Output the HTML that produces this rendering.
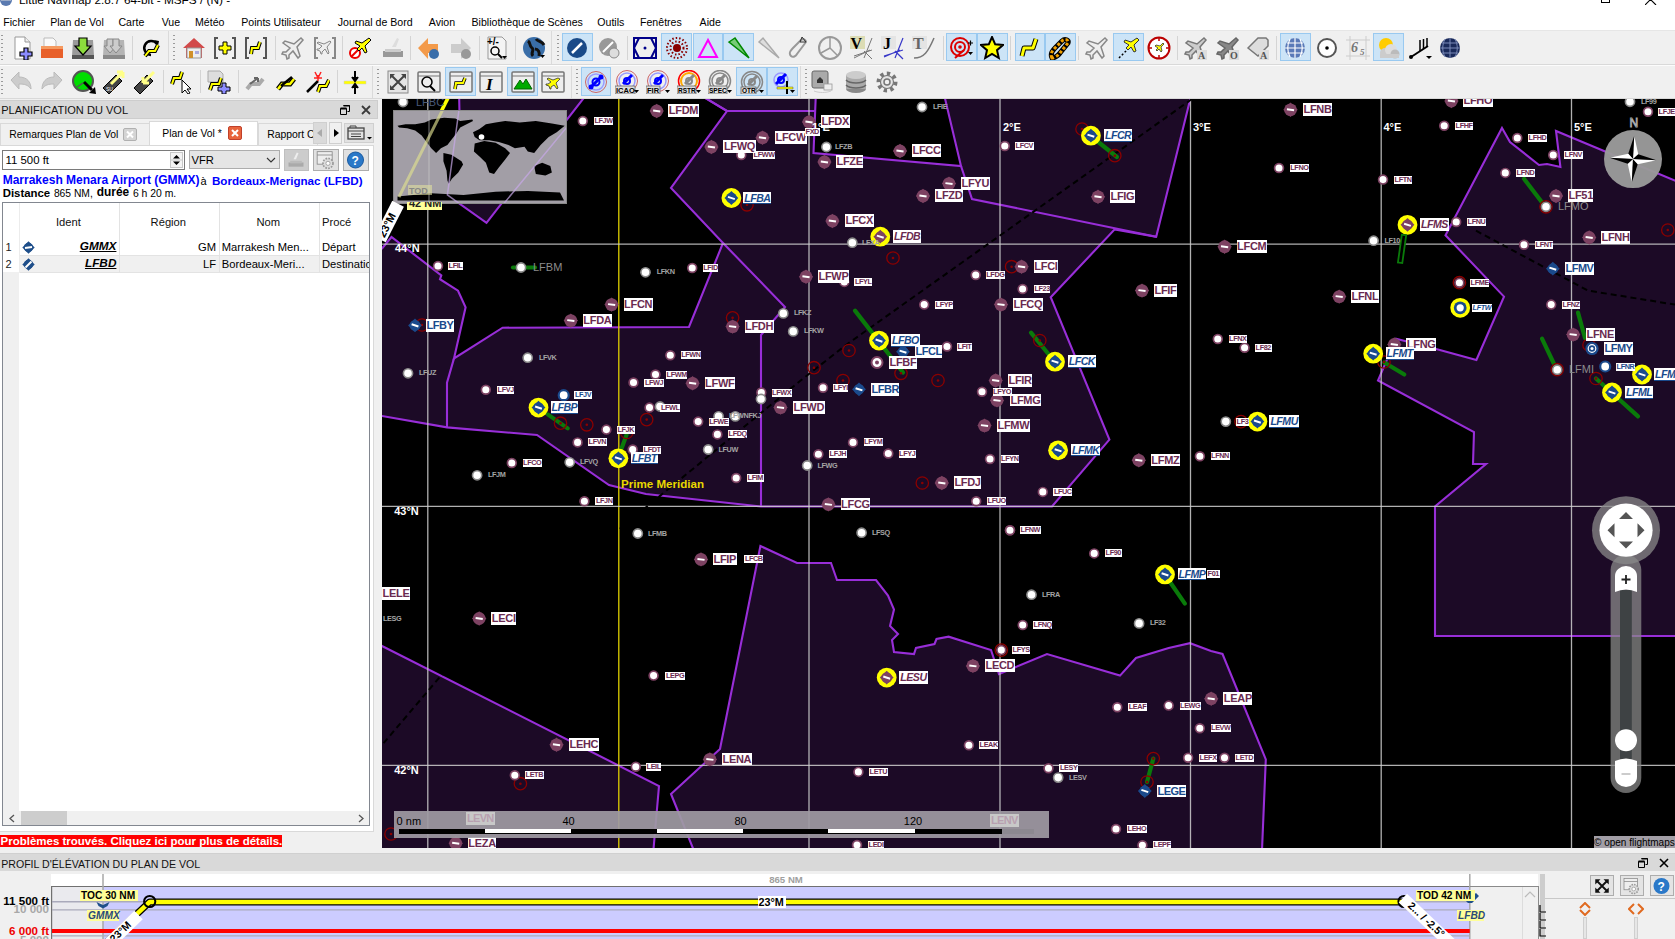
<!DOCTYPE html>
<html><head><meta charset="utf-8">
<style>
*{box-sizing:border-box;margin:0;padding:0}
html,body{width:1675px;height:939px;overflow:hidden;background:#f0f0f0;font-family:"Liberation Sans",sans-serif;font-size:12px;color:#000}
.a{position:absolute}
.t{position:absolute;white-space:pre;line-height:1}
</style></head><body>
<div class="a" style="left:0;top:0;width:1675px;height:30px;background:#fff"></div>
<svg class="a" style="left:0;top:-5px" width="14" height="12"><circle cx="6" cy="5" r="6" fill="#5a7ab0"/><path d="M1 5h10" stroke="#ddd"/></svg>
<div class="t" style="left:19px;top:-4.99px;font-size:11.8px;color:#000">Little Navmap 2.8.7 64-bit - MSFS / (N) -</div>
<div class="a" style="left:1601px;top:-6px;width:9px;height:9px;border:1px solid #000"></div>
<svg class="a" style="left:1645px;top:-6px" width="12" height="11"><path d="M0 0L11 11M11 0L0 11" stroke="#000" stroke-width="1.1"/></svg>
<div class="t" style="left:3.3px;top:16.83px;font-size:10.6px;">Fichier</div>
<div class="t" style="left:50.2px;top:16.83px;font-size:10.6px;">Plan de Vol</div>
<div class="t" style="left:118.4px;top:16.83px;font-size:10.6px;">Carte</div>
<div class="t" style="left:161.7px;top:16.83px;font-size:10.6px;">Vue</div>
<div class="t" style="left:195px;top:16.83px;font-size:10.6px;">Météo</div>
<div class="t" style="left:241.2px;top:16.83px;font-size:10.6px;">Points Utilisateur</div>
<div class="t" style="left:337.8px;top:16.83px;font-size:10.6px;">Journal de Bord</div>
<div class="t" style="left:428.8px;top:16.83px;font-size:10.6px;">Avion</div>
<div class="t" style="left:471.5px;top:16.83px;font-size:10.6px;">Bibliothèque de Scènes</div>
<div class="t" style="left:597.3px;top:16.83px;font-size:10.6px;">Outils</div>
<div class="t" style="left:640px;top:16.83px;font-size:10.6px;">Fenêtres</div>
<div class="t" style="left:699.6px;top:16.83px;font-size:10.6px;">Aide</div>
<div class="a" style="left:0;top:30px;width:1675px;height:1px;background:#e6e6e6"></div>
<div class="a" style="left:0;top:64px;width:1675px;height:1px;background:#d9d9d9"></div>
<div class="a" style="left:0;top:65px;width:1675px;height:1px;background:#fcfcfc"></div>
<div class="a" style="left:0;top:98px;width:1675px;height:1px;background:#d9d9d9"></div>
<div class="a" style="left:562px;top:33px;width:31px;height:28.4px;background:#cce4f7;border:1px solid #99c9f0"></div>
<div class="a" style="left:661.4px;top:33px;width:31.100000000000023px;height:28.4px;background:#cce4f7;border:1px solid #99c9f0"></div>
<div class="a" style="left:692.5px;top:33px;width:30.5px;height:28.4px;background:#cce4f7;border:1px solid #99c9f0"></div>
<div class="a" style="left:723px;top:33px;width:30.600000000000023px;height:28.4px;background:#cce4f7;border:1px solid #99c9f0"></div>
<div class="a" style="left:946.2px;top:33px;width:30.799999999999955px;height:28.4px;background:#cce4f7;border:1px solid #99c9f0"></div>
<div class="a" style="left:977px;top:33px;width:30.799999999999955px;height:28.4px;background:#cce4f7;border:1px solid #99c9f0"></div>
<div class="a" style="left:1014.5px;top:33px;width:30.5px;height:28.4px;background:#cce4f7;border:1px solid #99c9f0"></div>
<div class="a" style="left:1045px;top:33px;width:30.5px;height:28.4px;background:#cce4f7;border:1px solid #99c9f0"></div>
<div class="a" style="left:1113.4px;top:33px;width:30.299999999999955px;height:28.4px;background:#cce4f7;border:1px solid #99c9f0"></div>
<div class="a" style="left:1280px;top:33px;width:30.59999999999991px;height:28.4px;background:#cce4f7;border:1px solid #99c9f0"></div>
<div class="a" style="left:1373.2px;top:33px;width:30.399999999999864px;height:28.4px;background:#cce4f7;border:1px solid #99c9f0"></div>
<div class="a" style="left:445px;top:67px;width:31px;height:28.5px;background:#cce4f7;border:1px solid #99c9f0"></div>
<div class="a" style="left:507px;top:67px;width:31px;height:28.5px;background:#cce4f7;border:1px solid #99c9f0"></div>
<div class="a" style="left:581.4px;top:67px;width:30.100000000000023px;height:28.5px;background:#cce4f7;border:1px solid #99c9f0"></div>
<div class="a" style="left:736px;top:67px;width:31px;height:28.5px;background:#cce4f7;border:1px solid #99c9f0"></div>
<div class="a" style="left:767px;top:67px;width:31px;height:28.5px;background:#cce4f7;border:1px solid #99c9f0"></div>
<div class="a" style="left:132px;top:36px;width:1px;height:24px;background:#d4d4d4"></div>
<div class="a" style="left:274.6px;top:36px;width:1px;height:24px;background:#d4d4d4"></div>
<div class="a" style="left:342.3px;top:36px;width:1px;height:24px;background:#d4d4d4"></div>
<div class="a" style="left:410.4px;top:36px;width:1px;height:24px;background:#d4d4d4"></div>
<div class="a" style="left:478.6px;top:36px;width:1px;height:24px;background:#d4d4d4"></div>
<div class="a" style="left:515.3px;top:36px;width:1px;height:24px;background:#d4d4d4"></div>
<div class="a" style="left:626.5px;top:36px;width:1px;height:24px;background:#d4d4d4"></div>
<div class="a" style="left:942.6px;top:36px;width:1px;height:24px;background:#d4d4d4"></div>
<div class="a" style="left:1010.3px;top:36px;width:1px;height:24px;background:#d4d4d4"></div>
<div class="a" style="left:1078px;top:36px;width:1px;height:24px;background:#d4d4d4"></div>
<div class="a" style="left:1177.4px;top:36px;width:1px;height:24px;background:#d4d4d4"></div>
<div class="a" style="left:1276.4px;top:36px;width:1px;height:24px;background:#d4d4d4"></div>
<div class="a" style="left:163.4px;top:70px;width:1px;height:23px;background:#d4d4d4"></div>
<div class="a" style="left:200px;top:70px;width:1px;height:23px;background:#d4d4d4"></div>
<div class="a" style="left:237.8px;top:70px;width:1px;height:23px;background:#d4d4d4"></div>
<div class="a" style="left:337px;top:70px;width:1px;height:23px;background:#d4d4d4"></div>
<div class="a" style="left:168.4px;top:31px;width:1px;height:33px;background:#dadada"></div>
<div class="a" style="left:551.3px;top:31px;width:1px;height:33px;background:#dadada"></div>
<div class="a" style="left:372.4px;top:66px;width:1px;height:32px;background:#dadada"></div>
<div class="a" style="left:570.5px;top:66px;width:1px;height:32px;background:#dadada"></div>
<div class="a" style="left:799.6px;top:66px;width:1px;height:32px;background:#dadada"></div>
<div class="a" style="left:1px;top:35px;width:2px;height:26px;background:repeating-linear-gradient(#9a9a9a 0 1px,transparent 1px 4px)"></div>
<div class="a" style="left:173.4px;top:35px;width:2px;height:26px;background:repeating-linear-gradient(#9a9a9a 0 1px,transparent 1px 4px)"></div>
<div class="a" style="left:556.8px;top:35px;width:2px;height:26px;background:repeating-linear-gradient(#9a9a9a 0 1px,transparent 1px 4px)"></div>
<div class="a" style="left:1px;top:69px;width:2px;height:26px;background:repeating-linear-gradient(#9a9a9a 0 1px,transparent 1px 4px)"></div>
<div class="a" style="left:377.4px;top:69px;width:2px;height:26px;background:repeating-linear-gradient(#9a9a9a 0 1px,transparent 1px 4px)"></div>
<div class="a" style="left:575.5px;top:69px;width:2px;height:26px;background:repeating-linear-gradient(#9a9a9a 0 1px,transparent 1px 4px)"></div>
<div class="a" style="left:804.6px;top:69px;width:2px;height:26px;background:repeating-linear-gradient(#9a9a9a 0 1px,transparent 1px 4px)"></div>
<svg class="a" style="left:11px;top:36px" width="24" height="24" viewBox="0 0 24 24"><path d="M4 1h10l5 5v17H4z" fill="#fff" stroke="#999"/><path d="M14 1v5h5" fill="#eee" stroke="#999"/><path d="M13 12h4v4h4v4h-4v4h-4v-4H9v-4h4z" fill="#8c8cff" stroke="#000" stroke-width="1.2"/></svg>
<svg class="a" style="left:40px;top:36px" width="24" height="24" viewBox="0 0 24 24"><path d="M4 2h9l3 3v6H4z" fill="#fafafa" stroke="#bbb"/><path d="M1 10h22v12H1z" fill="#e8602a"/><path d="M1 10h22v3H1z" fill="#f59a60"/></svg>
<svg class="a" style="left:71px;top:36px" width="24" height="24" viewBox="0 0 24 24"><path d="M2 4h20l1 16H1z" fill="#9a9a9a"/><path d="M1 19h22v4H1z" fill="#555"/><path d="M8 2h8v8h4l-8 9-8-9h4z" fill="#8cdc3c" stroke="#000" stroke-width="1.2"/></svg>
<svg class="a" style="left:102px;top:36px" width="24" height="24" viewBox="0 0 24 24"><path d="M2 4h20l1 16H1z" fill="#b4b4b4"/><path d="M1 19h22v4H1z" fill="#8a8a8a"/><path d="M5 3h6v7h3l-6 7-6-7h3z" fill="#ccc" stroke="#888"/><path d="M11 3h6v7h3l-6 7-6-7h3z" fill="#ccc" stroke="#888"/></svg>
<svg class="a" style="left:139px;top:36px" width="24" height="24" viewBox="0 0 24 24"><path d="M12 19a7 7 0 1 1 6-11" fill="none" stroke="#000" stroke-width="2.5"/><path d="M15 4l5 1-1 5z" fill="#000"/><path d="M6 20l4-5h6l3-6" fill="none" stroke="#000" stroke-width="4"/><path d="M6 20l4-5h6l3-6" fill="none" stroke="#ff0" stroke-width="2"/></svg>
<svg class="a" style="left:182px;top:36px" width="24" height="24" viewBox="0 0 24 24"><path d="M12 2L1 12h3v10h16V12h3z" fill="#d24a4a"/><path d="M5 12h14v10H5z" fill="#eee" stroke="#999"/><path d="M7 15h4v7H7z" fill="#d0902a"/><path d="M13 15h4v3h-4z" fill="#aad"/></svg>
<svg class="a" style="left:213px;top:36px" width="24" height="24" viewBox="0 0 24 24"><path d="M5 2H2v20h3M19 2h3v20h-3" fill="none" stroke="#555" stroke-width="2"/><path d="M10 6h4v4h4v4h-4v4h-4v-4H6v-4h4z" fill="#ff0" stroke="#000"/></svg>
<svg class="a" style="left:244px;top:36px" width="24" height="24" viewBox="0 0 24 24"><path d="M5 2H2v20h3M19 2h3v20h-3" fill="none" stroke="#555" stroke-width="2"/><path d="M7 18l1-6h6l2-6" fill="none" stroke="#000" stroke-width="4"/><path d="M7 18l1-6h6l2-6" fill="none" stroke="#ff0" stroke-width="2"/></svg>
<svg class="a" style="left:281px;top:36px" width="24" height="24" viewBox="0 0 24 24"><path d="M20 2l2 2-6 7 3 9-2 2-5-7-4 4v3l-2 1-1-4-4-1 1-2h3l4-4-7-5 2-2 9 3z" fill="#eee" stroke="#888" stroke-width="1.5"/></svg>
<svg class="a" style="left:313px;top:36px" width="24" height="24" viewBox="0 0 24 24"><path d="M5 2H2v20h3M19 2h3v20h-3" fill="none" stroke="#888" stroke-width="2"/><path d="M17 5l1 1-4 5 2 6-1 1-3-5-3 3v2h-1l-1-3-3-1v-1h2l3-3-5-3 1-1 6 2z" fill="#eee" stroke="#888"/></svg>
<svg class="a" style="left:348px;top:36px" width="24" height="24" viewBox="0 0 24 24"><circle cx="7" cy="17" r="5" fill="#fff" stroke="#e00" stroke-width="2"/><path d="M3 21l8-8" stroke="#e00" stroke-width="2"/><path d="M21 2l2 2-6 6 2 6-2 1-3-5-3 3-2-2 3-3-5-3 1-2 6 2z" fill="#ff0" stroke="#000"/></svg>
<svg class="a" style="left:381px;top:36px" width="24" height="24" viewBox="0 0 24 24"><path d="M16 2l2 1-3 8h-4z" fill="#ddd"/><path d="M2 15h20v6H2z" fill="#999"/><path d="M4 13h16v3H4z" fill="#ccc"/></svg>
<svg class="a" style="left:417px;top:36px" width="24" height="24" viewBox="0 0 24 24"><path d="M1 12L11 2v6h10v9H11v6z" fill="#f39a4a"/><circle cx="17" cy="18" r="5" fill="#3a6eaa"/></svg>
<svg class="a" style="left:448px;top:36px" width="24" height="24" viewBox="0 0 24 24"><path d="M23 12L13 2v6H3v9h10v6z" fill="#ccc"/><circle cx="18" cy="18" r="5" fill="#999"/></svg>
<svg class="a" style="left:485px;top:36px" width="24" height="24" viewBox="0 0 24 24"><path d="M3 1h14l4 4v18H3z" fill="#f4f4f4" stroke="#999"/><text x="2" y="9" font-size="10" font-weight="bold" font-family="Liberation Sans">+/-</text><circle cx="10" cy="15" r="4" fill="none" stroke="#000" stroke-width="1.5"/><path d="M13 18l4 4" stroke="#000" stroke-width="2"/><path d="M17 20h5l-2.5 3z" fill="#000"/></svg>
<svg class="a" style="left:522px;top:36px" width="24" height="24" viewBox="0 0 24 24"><circle cx="12" cy="12" r="11" fill="#3a6ea8"/><path d="M6 5c3 2 1 5 4 7s-2 5 1 8M14 3c2 3 6 2 8 6M13 13c3 0 5 3 4 7" stroke="#111" stroke-width="3" fill="none"/><path d="M18 19h5l-2.5 3z" fill="#000"/></svg>
<svg class="a" style="left:565px;top:36px" width="24" height="24" viewBox="0 0 24 24"><circle cx="12" cy="12" r="10" fill="#1a4a88"/><path d="M7 17L17 7" stroke="#fff" stroke-width="2.5"/></svg>
<svg class="a" style="left:597px;top:36px" width="24" height="24" viewBox="0 0 24 24"><circle cx="11" cy="11" r="9" fill="#999"/><path d="M6 16L16 6" stroke="#fff" stroke-width="2"/><circle cx="17" cy="17" r="5" fill="#ddd" stroke="#888"/></svg>
<svg class="a" style="left:633px;top:36px" width="24" height="24" viewBox="0 0 24 24"><path d="M1 2h22v20H1z" fill="none" stroke="#00008a" stroke-width="2"/><path d="M6 2L1 12l5 10M18 2l5 10-5 10" fill="none" stroke="#00008a" stroke-width="2"/><circle cx="12" cy="12" r="1.5" fill="#00008a"/></svg>
<svg class="a" style="left:665px;top:36px" width="24" height="24" viewBox="0 0 24 24"><circle cx="12" cy="12" r="10" fill="none" stroke="#8a0000" stroke-width="2" stroke-dasharray="1.5 2"/><circle cx="12" cy="12" r="6.5" fill="none" stroke="#8a0000" stroke-width="2" stroke-dasharray="1.5 2"/><circle cx="12" cy="12" r="4" fill="#8a0000"/></svg>
<svg class="a" style="left:696px;top:36px" width="24" height="24" viewBox="0 0 24 24"><path d="M12 4L3 21h18z" fill="none" stroke="#f0f" stroke-width="2"/></svg>
<svg class="a" style="left:727px;top:36px" width="24" height="24" viewBox="0 0 24 24"><path d="M2 6l6-4 14 20z" fill="#7c7" stroke="#080" stroke-width="1.5"/></svg>
<svg class="a" style="left:757px;top:36px" width="24" height="24" viewBox="0 0 24 24"><path d="M2 6l4-4 16 20z" fill="#ddd" stroke="#aaa" stroke-width="1.5"/></svg>
<svg class="a" style="left:787px;top:36px" width="24" height="24" viewBox="0 0 24 24"><path d="M4 20c-3-3 0-6 2-8l8-8c2-2 5 0 5 2l-9 12c-1 2-4 4-6 2z" fill="none" stroke="#999" stroke-width="2"/><path d="M15 1l4 5h-6z" fill="none" stroke="#333"/></svg>
<svg class="a" style="left:818px;top:36px" width="24" height="24" viewBox="0 0 24 24"><circle cx="12" cy="12" r="11" fill="none" stroke="#999" stroke-width="2"/><path d="M12 12V2M12 12L3 17M12 12l8 8" stroke="#999" stroke-width="1.5"/></svg>
<svg class="a" style="left:850px;top:36px" width="24" height="24" viewBox="0 0 24 24"><rect x="0" y="0" width="15" height="13" fill="#dcdcb4"/><text x="0.5" y="12.5" font-size="16" font-weight="bold" font-family="Liberation Serif">V</text><path d="M4 20l18-6M4 22l16-8M14 15l8 8M22 2l-8 20" stroke="#777" stroke-width="1"/></svg>
<svg class="a" style="left:881px;top:36px" width="24" height="24" viewBox="0 0 24 24"><rect x="0" y="0" width="15" height="13" fill="#e4e4e4"/><text x="2" y="12.5" font-size="16" font-weight="bold" font-family="Liberation Serif">J</text><path d="M3 20l19-6M3 21l16-7M14 15l8 8M22 2l-8 20" stroke="#3838c8" stroke-width="1.2"/></svg>
<svg class="a" style="left:912px;top:36px" width="24" height="24" viewBox="0 0 24 24"><rect x="0" y="0" width="15" height="13" fill="#e4e4e4"/><text x="1" y="12.5" font-size="16" font-weight="bold" font-family="Liberation Serif" fill="#666">T</text><path d="M2 22c10 0 14-6 20-20" fill="none" stroke="#777" stroke-width="1.5"/></svg>
<svg class="a" style="left:950px;top:36px" width="24" height="24" viewBox="0 0 24 24"><circle cx="10" cy="11" r="9" fill="none" stroke="#d00" stroke-width="2"/><circle cx="10" cy="11" r="5" fill="none" stroke="#d00" stroke-width="2"/><circle cx="10" cy="11" r="1.8" fill="#d00"/><path d="M18 7h5M20.5 4.5v5" stroke="#000" stroke-width="1.2"/><path d="M18 16h5l-2.5 3z" fill="#000"/><path d="M14 14l-9 8" stroke="#d00" stroke-width="2"/></svg>
<svg class="a" style="left:980px;top:36px" width="24" height="24" viewBox="0 0 24 24"><path d="M12 1l3.2 7.3 7.8.7-6 5.2 1.8 7.8L12 18l-6.8 4 1.8-7.8-6-5.2 7.8-.7z" fill="#ff0" stroke="#000" stroke-width="2"/></svg>
<svg class="a" style="left:1018px;top:36px" width="24" height="24" viewBox="0 0 24 24"><path d="M4 20l2-8h9l3-9" fill="none" stroke="#000" stroke-width="5" stroke-linejoin="round"/><path d="M4 20l2-8h9l3-9" fill="none" stroke="#ff0" stroke-width="3" stroke-linejoin="round"/></svg>
<svg class="a" style="left:1048px;top:36px" width="24" height="24" viewBox="0 0 24 24"><path d="M4 22c-2-4 0-7 3-10l7-7c3-3 7-1 6 2l-8 10c-2 3-6 5-8 5z" fill="none" stroke="#000" stroke-width="5"/><path d="M4 22c-2-4 0-7 3-10l7-7c3-3 7-1 6 2l-8 10c-2 3-6 5-8 5z" fill="none" stroke="#f0a000" stroke-width="3" stroke-dasharray="3 2"/></svg>
<svg class="a" style="left:1085px;top:36px" width="24" height="24" viewBox="0 0 24 24"><path d="M20 2l2 2-6 7 3 9-2 2-5-7-4 4v3l-2 1-1-4-4-1 1-2h3l4-4-7-5 2-2 9 3z" fill="#eee" stroke="#888" stroke-width="1.5"/></svg>
<svg class="a" style="left:1117px;top:36px" width="24" height="24" viewBox="0 0 24 24"><path d="M2 22l8-8" stroke="#000" stroke-width="1.5" stroke-dasharray="2 2"/><path d="M20 2l2 2-5 5 2 6-2 1-3-5-3 3-2-2 3-3-5-3 1-2 6 2z" fill="#ff0" stroke="#333"/></svg>
<svg class="a" style="left:1147px;top:36px" width="24" height="24" viewBox="0 0 24 24"><circle cx="12" cy="12" r="10.5" fill="#fff" stroke="#b00" stroke-width="2"/><path d="M12 2v3M12 19v3M2 12h3M19 12h3" stroke="#b00" stroke-width="1.5"/><path d="M16 7l1 1-3 3 1 4-1 1-2-3-2 2-1-1 2-2-3-2 1-1 4 1z" fill="#ff0" stroke="#333" stroke-width=".8"/></svg>
<svg class="a" style="left:1184px;top:36px" width="24" height="24" viewBox="0 0 24 24"><path d="M20 2l2 2-6 7 3 9-2 2-5-7-4 4v3l-2 1-1-4-4-1 1-2h3l4-4-7-5 2-2 9 3z" fill="#ccc" stroke="#777" stroke-width="1.5"/><rect x="13" y="14" width="10" height="10" fill="#ddd"/><text x="14" y="23" font-size="10" font-weight="bold" font-family="Liberation Serif" fill="#555">A</text></svg>
<svg class="a" style="left:1216px;top:36px" width="24" height="24" viewBox="0 0 24 24"><path d="M20 2l2 2-6 7 3 9-2 2-5-7-4 4v3l-2 1-1-4-4-1 1-2h3l4-4-7-5 2-2 9 3z" fill="#888" stroke="#666" stroke-width="1.5"/><rect x="13" y="14" width="10" height="10" fill="#ddd"/><text x="14" y="23" font-size="10" font-weight="bold" font-family="Liberation Serif" fill="#555">O</text></svg>
<svg class="a" style="left:1246px;top:36px" width="24" height="24" viewBox="0 0 24 24"><path d="M2 12l10-10h8l2 2v6l-10 10z" fill="#ddd" stroke="#777" stroke-width="1.5"/><rect x="13" y="14" width="10" height="10" fill="#ddd"/><text x="14" y="23" font-size="10" font-weight="bold" font-family="Liberation Serif" fill="#555">A</text></svg>
<svg class="a" style="left:1283px;top:36px" width="24" height="24" viewBox="0 0 24 24"><circle cx="12" cy="12" r="10" fill="#5a7ab8"/><path d="M2 12h20M12 2v20M4 7h16M4 17h16M7 3c-3 6-3 12 0 18M17 3c3 6 3 12 0 18" stroke="#fff" stroke-width="1.2" fill="none"/></svg>
<svg class="a" style="left:1315px;top:36px" width="24" height="24" viewBox="0 0 24 24"><circle cx="12" cy="12" r="9" fill="#fff" stroke="#555" stroke-width="2"/><circle cx="12" cy="12" r="1.8" fill="#000"/></svg>
<svg class="a" style="left:1346px;top:36px" width="24" height="24" viewBox="0 0 24 24"><path d="M4 0v24M20 0v24M0 4h24M0 20h24" stroke="#ccc"/><text x="5" y="16" font-size="14" font-style="italic" font-weight="bold" font-family="Liberation Serif" fill="#777">6</text><text x="14" y="19" font-size="9" font-style="italic" font-weight="bold" font-family="Liberation Serif" fill="#777">5</text></svg>
<svg class="a" style="left:1376px;top:36px" width="24" height="24" viewBox="0 0 24 24"><circle cx="10" cy="9" r="7" fill="#fc0"/><circle cx="9" cy="17" r="5" fill="#ccc"/><circle cx="15" cy="14" r="6" fill="#ddd"/><circle cx="19" cy="18" r="4.5" fill="#bbb"/><path d="M4 18h19v4H4z" fill="#ccc"/></svg>
<svg class="a" style="left:1408px;top:36px" width="24" height="24" viewBox="0 0 24 24"><path d="M3 21l17-11" stroke="#000" stroke-width="2"/><circle cx="3" cy="21" r="2" fill="#000"/><path d="M12 15V4M15.5 13V3M19 11V2" stroke="#000" stroke-width="1.5"/><path d="M18 20h6l-3 3z" fill="#000"/></svg>
<svg class="a" style="left:1438px;top:36px" width="24" height="24" viewBox="0 0 24 24"><circle cx="12" cy="12" r="10" fill="#1a2a5a"/><path d="M2 12h20M12 2v20M4 7h16M4 17h16M7 3c-3 6-3 12 0 18M17 3c3 6 3 12 0 18" stroke="#7a8ab8" stroke-width="1" fill="none"/></svg>
<svg class="a" style="left:9px;top:70px" width="24" height="24" viewBox="0 0 24 24"><path d="M2 10l8-8v5c8 0 12 5 12 12-3-4-6-5-12-5v5z" fill="#ccc" stroke="#bbb"/></svg>
<svg class="a" style="left:40px;top:70px" width="24" height="24" viewBox="0 0 24 24"><path d="M22 10l-8-8v5C6 7 2 12 2 19c3-4 6-5 12-5v5z" fill="#ccc" stroke="#bbb"/></svg>
<svg class="a" style="left:72px;top:70px" width="24" height="24" viewBox="0 0 24 24"><circle cx="11" cy="11" r="10" fill="#0d0" stroke="#555" stroke-width="2"/><path d="M12 12l8 8" stroke="#000" stroke-width="3"/><path d="M17 23l6-6 1 7z" fill="#000"/><path d="M5 17l6-4" stroke="#555" stroke-width="1.5"/></svg>
<svg class="a" style="left:102px;top:70px" width="24" height="24" viewBox="0 0 24 24"><path d="M1 18L14 5l6 6L7 24z" fill="#444" stroke="#000"/><path d="M9 14L21 2M21 2h-6M21 2v6" stroke="#ff8" stroke-width="3"/><text x="4" y="21" font-size="5" fill="#fff">SU</text></svg>
<svg class="a" style="left:133px;top:70px" width="24" height="24" viewBox="0 0 24 24"><path d="M1 18L14 5l6 6L7 24z" fill="#444" stroke="#000"/><path d="M21 2L10 13M10 13h6M10 13V7" stroke="#ff8" stroke-width="3"/></svg>
<svg class="a" style="left:170px;top:70px" width="24" height="24" viewBox="0 0 24 24"><path d="M2 14l2-6h6l2-6" fill="none" stroke="#000" stroke-width="4"/><path d="M2 14l2-6h6l2-6" fill="none" stroke="#ff0" stroke-width="2"/><path d="M12 10v13l3-3 3 4 2-1-3-4h4z" fill="#fff" stroke="#000"/></svg>
<svg class="a" style="left:207px;top:70px" width="24" height="24" viewBox="0 0 24 24"><path d="M1 1h12l3 3v8H1z" fill="#ddd" stroke="#aaa"/><path d="M3 20l2-6h7l2-6" fill="none" stroke="#000" stroke-width="4"/><path d="M3 20l2-6h7l2-6" fill="none" stroke="#ff0" stroke-width="2"/><path d="M15 13h4v4h4v4h-4v3h-4v-3h-4v-4h4z" fill="#8c8cff" stroke="#000"/></svg>
<svg class="a" style="left:244px;top:70px" width="24" height="24" viewBox="0 0 24 24"><path d="M3 19l4-5h8l4-5" fill="none" stroke="#aaa" stroke-width="4"/><path d="M6 14l8-6M14 8h-4M14 8v4" stroke="#666" stroke-width="2"/></svg>
<svg class="a" style="left:275px;top:70px" width="24" height="24" viewBox="0 0 24 24"><path d="M3 19l4-5h8l4-5" fill="none" stroke="#000" stroke-width="5"/><path d="M3 19l4-5h8l4-5" fill="none" stroke="#ff0" stroke-width="2.5"/><path d="M6 16l11-9" stroke="#000" stroke-width="2.5"/></svg>
<svg class="a" style="left:306px;top:70px" width="24" height="24" viewBox="0 0 24 24"><path d="M1 22l11-11" stroke="#000" stroke-width="2.5"/><path d="M9 2l3 6M15 2l-3 6M12 5v6M8 8h8" stroke="#f22" stroke-width="1.5"/><path d="M12 22l2-6h6l3-6" fill="none" stroke="#000" stroke-width="4"/><path d="M12 22l2-6h6l3-6" fill="none" stroke="#ff0" stroke-width="2"/></svg>
<svg class="a" style="left:343px;top:70px" width="24" height="24" viewBox="0 0 24 24"><path d="M1 11h22v3H1z" fill="#ff0" stroke="#ccc" stroke-width=".5"/><path d="M12 1v9M9 7l3 4 3-4M12 24v-9M9 18l3-4 3 4" stroke="#000" stroke-width="2" fill="#000"/></svg>
<svg class="a" style="left:386px;top:70px" width="24" height="24" viewBox="0 0 24 24"><rect x="2" y="1" width="20" height="22" fill="#e4e4e4" stroke="#888"/><path d="M5 5l14 14M19 5L5 19" stroke="#444" stroke-width="2"/><path d="M4 4h5l-5 5zM20 4h-5l5 5zM4 20h5l-5-5zM20 20h-5l5-5z" fill="#444"/></svg>
<svg class="a" style="left:417px;top:70px" width="24" height="24" viewBox="0 0 24 24"><rect x="1" y="2" width="22" height="20" rx="1" fill="#eee" stroke="#777" stroke-width="1.5"/><path d="M1 6h22" stroke="#777"/><circle cx="10" cy="12" r="5" fill="none" stroke="#000" stroke-width="1.5"/><path d="M13 16l5 5" stroke="#000" stroke-width="2"/></svg>
<svg class="a" style="left:449px;top:70px" width="24" height="24" viewBox="0 0 24 24"><rect x="1" y="2" width="22" height="20" rx="1" fill="#eee" stroke="#777" stroke-width="1.5"/><path d="M1 6h22" stroke="#777"/><path d="M6 19l1-6h7l2-5" fill="none" stroke="#000" stroke-width="3.5"/><path d="M6 19l1-6h7l2-5" fill="none" stroke="#ff0" stroke-width="2"/></svg>
<svg class="a" style="left:479px;top:70px" width="24" height="24" viewBox="0 0 24 24"><rect x="1" y="2" width="22" height="20" rx="1" fill="#eee" stroke="#777" stroke-width="1.5"/><path d="M1 6h22" stroke="#777"/><text x="7" y="20" font-size="17" font-weight="bold" font-style="italic" font-family="Liberation Serif">I</text></svg>
<svg class="a" style="left:511px;top:70px" width="24" height="24" viewBox="0 0 24 24"><rect x="1" y="2" width="22" height="20" rx="1" fill="#eee" stroke="#777" stroke-width="1.5"/><path d="M1 6h22" stroke="#777"/><path d="M3 19l6-9 3 4 3-5 6 10z" fill="#0a0" stroke="#060"/></svg>
<svg class="a" style="left:541px;top:70px" width="24" height="24" viewBox="0 0 24 24"><rect x="1" y="2" width="22" height="20" rx="1" fill="#eee" stroke="#777" stroke-width="1.5"/><path d="M1 6h22" stroke="#777"/><path d="M17 8l2 1-4 4 2 5-1 1-3-4-3 2v2h-1l-1-3-3-1v-1h2l3-2-4-3 1-1 5 2z" fill="#ff0" stroke="#333" stroke-width=".8"/></svg>
<svg class="a" style="left:584px;top:70px" width="24" height="24" viewBox="0 0 24 24"><circle cx="12" cy="12" r="10.5" fill="none" stroke="#c66" stroke-width="1"/><circle cx="12" cy="12" r="8" fill="none" stroke="#99f" stroke-width="1.5"/><path d="M7 17L17 7" stroke="#00f" stroke-width="3"/><circle cx="12" cy="12" r="3.5" fill="none" stroke="#00f" stroke-width="2"/><circle cx="7" cy="17" r="2.5" fill="#00f"/><circle cx="17" cy="7" r="2.5" fill="#00f"/></svg>
<svg class="a" style="left:615px;top:70px" width="24" height="24" viewBox="0 0 24 24"><circle cx="12" cy="11" r="10.5" fill="none" stroke="#c66" stroke-width="1"/><circle cx="12" cy="11" r="8" fill="none" stroke="#99f" stroke-width="1.5"/><path d="M8 14L17 5" stroke="#00f" stroke-width="3"/><circle cx="12" cy="11" r="3" fill="none" stroke="#00f" stroke-width="2"/><rect x="0" y="16" width="20" height="8" fill="#ddd" stroke="#666" stroke-width=".8"/><text x="1" y="23" font-size="7.5" font-weight="bold" font-family="Liberation Sans">ICAO</text><path d="M19 20h5l-2.5 3z" fill="#000"/></svg>
<svg class="a" style="left:646px;top:70px" width="24" height="24" viewBox="0 0 24 24"><circle cx="12" cy="11" r="10.5" fill="none" stroke="#c66" stroke-width="1"/><circle cx="12" cy="11" r="8" fill="none" stroke="#99f" stroke-width="1.5"/><path d="M8 14L17 5" stroke="#00f" stroke-width="3"/><circle cx="12" cy="11" r="3" fill="none" stroke="#00f" stroke-width="2"/><rect x="0" y="16" width="14" height="8" fill="#ddd" stroke="#666" stroke-width=".8"/><text x="1" y="23" font-size="7.5" font-weight="bold" font-family="Liberation Sans">FIR</text><path d="M19 20h5l-2.5 3z" fill="#000"/></svg>
<svg class="a" style="left:677px;top:70px" width="24" height="24" viewBox="0 0 24 24"><circle cx="12" cy="11" r="10.5" fill="none" stroke="#f00" stroke-width="1.5"/><circle cx="12" cy="11" r="8" fill="none" stroke="#fa0" stroke-width="2"/><path d="M8 14L17 5" stroke="#888" stroke-width="3"/><circle cx="12" cy="11" r="3" fill="none" stroke="#888" stroke-width="2"/><rect x="0" y="16" width="19" height="8" fill="#ddd" stroke="#666" stroke-width=".8"/><text x="1" y="23" font-size="6.5" font-weight="bold" font-family="Liberation Sans">RSTR</text><path d="M19 20h5l-2.5 3z" fill="#000"/></svg>
<svg class="a" style="left:708px;top:70px" width="24" height="24" viewBox="0 0 24 24"><circle cx="12" cy="11" r="10.5" fill="none" stroke="#888" stroke-width="1.5"/><circle cx="12" cy="11" r="8" fill="none" stroke="#888" stroke-width="1.5"/><path d="M8 14L17 5" stroke="#888" stroke-width="3"/><circle cx="12" cy="11" r="3" fill="none" stroke="#888" stroke-width="2"/><rect x="0" y="16" width="19" height="8" fill="#ddd" stroke="#666" stroke-width=".8"/><text x="1" y="23" font-size="6.5" font-weight="bold" font-family="Liberation Sans">SPEC</text><path d="M19 20h5l-2.5 3z" fill="#000"/></svg>
<svg class="a" style="left:740px;top:70px" width="24" height="24" viewBox="0 0 24 24"><circle cx="12" cy="12" r="10.5" fill="none" stroke="#888" stroke-width="1.5"/><circle cx="12" cy="12" r="8" fill="none" stroke="#888" stroke-width="1.5"/><path d="M8 15L17 6" stroke="#888" stroke-width="3"/><circle cx="12" cy="12" r="3" fill="none" stroke="#888" stroke-width="2"/><rect x="1" y="17" width="15" height="7" fill="#ddd" stroke="#666" stroke-width=".8"/><text x="2" y="23" font-size="6.5" font-weight="bold" font-family="Liberation Sans">OTR</text><path d="M19 20h5l-2.5 3z" fill="#000"/></svg>
<svg class="a" style="left:771px;top:70px" width="24" height="24" viewBox="0 0 24 24"><circle cx="10" cy="10" r="7" fill="none" stroke="#99f" stroke-width="1.5"/><path d="M5 14L15 4" stroke="#00f" stroke-width="3"/><circle cx="10" cy="10" r="3" fill="none" stroke="#00f" stroke-width="2"/><path d="M6 17h16v2H6z" fill="#ff0" stroke="#555" stroke-width=".5"/><path d="M16 11v6M16 19v5" stroke="#000" stroke-width="2"/><path d="M19 20h5l-2.5 3z" fill="#000"/></svg>
<svg class="a" style="left:811px;top:70px" width="24" height="24" viewBox="0 0 24 24"><rect x="1" y="1" width="16" height="17" rx="2" fill="#aaa" stroke="#666"/><path d="M6 10l3-3 3 3v3H6z" fill="#333"/><rect x="13" y="14" width="8" height="6" fill="#eee" stroke="#999" stroke-width=".8"/><path d="M3 21c5 2 12 2 17 0" stroke="#ccc" fill="none"/></svg>
<svg class="a" style="left:844px;top:70px" width="24" height="24" viewBox="0 0 24 24"><ellipse cx="12" cy="19" rx="10" ry="4" fill="#888"/><rect x="2" y="5" width="20" height="14" fill="#aaa"/><ellipse cx="12" cy="5" rx="10" ry="4" fill="#ccc"/><path d="M2 10c4 4 16 4 20 0M2 15c4 4 16 4 20 0" stroke="#666" fill="none" stroke-width="1.5"/></svg>
<svg class="a" style="left:875px;top:70px" width="24" height="24" viewBox="0 0 24 24"><circle cx="12" cy="12" r="8.5" fill="none" stroke="#777" stroke-width="4" stroke-dasharray="3.3 3.3"/><circle cx="12" cy="12" r="6.5" fill="#e4e4e4" stroke="#777" stroke-width="1.2"/><circle cx="12" cy="12" r="3" fill="#f0f0f0" stroke="#777" stroke-width="1.5"/></svg>
<div class="a" style="left:0;top:100px;width:378px;height:19px;background:#d9d9d9;border:1px solid #cdcdcd;border-left:none"></div>
<div class="t" style="left:1.2px;top:105.44px;font-size:11.06px;color:#111">PLANIFICATION DU VOL</div>
<svg class="a" style="left:340px;top:105px" width="11" height="10"><path d="M3.5 0.5h6v6h-2M0.5 3.5h6v6h-6z" fill="none" stroke="#000" stroke-width="1"/><path d="M0.5 3.5h6" stroke="#000" stroke-width="2"/><path d="M3.5 0.5h6" stroke="#000" stroke-width="2"/></svg>
<svg class="a" style="left:361px;top:105px" width="10" height="10"><path d="M1 1L9 9M9 1L1 9" stroke="#3a3a3a" stroke-width="1.8"/></svg>
<div class="a" style="left:0;top:144.5px;width:374px;height:687px;background:#fff;border:1px solid #d9d9d9;border-left:none"></div>
<div class="a" style="left:0;top:123.4px;width:150px;height:21.5px;background:#f0f0f0;border:1px solid #d9d9d9;border-bottom:none"></div>
<div class="t" style="left:9.2px;top:129.70px;font-size:10.4px;">Remarques Plan de Vol</div>
<div class="a" style="left:123px;top:127.5px;width:13.6px;height:13px;background:#d4d4d4;border:1px solid #b0b0b0;border-radius:2px"></div>
<svg class="a" style="left:123px;top:127.5px" width="14" height="13"><path d="M4 3.5L10 9.5M10 3.5L4 9.5" stroke="#fff" stroke-width="2"/></svg>
<div class="a" style="left:149.4px;top:121.3px;width:108.2px;height:24px;background:#fff;border:1px solid #d9d9d9;border-bottom:none"></div>
<div class="t" style="left:162.3px;top:129.00px;font-size:10.4px;">Plan de Vol *</div>
<div class="a" style="left:228.3px;top:126.3px;width:13.4px;height:13.4px;background:#e8643c;border:1px solid #c0402a;border-radius:2px"></div>
<svg class="a" style="left:228.3px;top:126.3px" width="14" height="14"><path d="M4 4L10 10M10 4L4 10" stroke="#fff" stroke-width="2"/></svg>
<div class="a" style="left:257.6px;top:123.4px;width:60px;height:21.5px;background:#f0f0f0;border:1px solid #d9d9d9;border-bottom:none;overflow:hidden"></div>
<div class="t" style="left:267.2px;top:129.70px;font-size:10.4px;">Rapport C</div>
<div class="a" style="left:313px;top:122px;width:13.6px;height:21.7px;background:#dadada;border:1px solid #cfcfcf"></div>
<svg class="a" style="left:313px;top:122px" width="14" height="22"><path d="M9 7v8l-5-4z" fill="#aaa"/></svg>
<div class="a" style="left:328.5px;top:122px;width:13.5px;height:21.7px;background:#f0f0f0;border:1px solid #cfcfcf"></div>
<svg class="a" style="left:328.5px;top:122px" width="14" height="22"><path d="M5 7v8l5-4z" fill="#000"/></svg>
<div class="a" style="left:343.8px;top:123px;width:30.7px;height:19.5px;background:#e2e2e2;border:1px solid #cfcfcf"></div>
<svg class="a" style="left:346px;top:125px" width="28" height="16"><rect x="2" y="3" width="16" height="11" fill="none" stroke="#444" stroke-width="1.3"/><path d="M2 6h16M5 9h10M5 11.5h10" stroke="#444" stroke-width="1"/><path d="M4 3V1h6v2" fill="none" stroke="#444"/><path d="M21 12h5l-2.5 2.5z" fill="#000"/></svg>
<div class="a" style="left:2.2px;top:150.4px;width:183.3px;height:19.3px;background:#fff;border:1px solid #7a7a7a"></div>
<div class="t" style="left:5.5px;top:155.15px;font-size:11.4px;">11 500 ft</div>
<div class="a" style="left:170px;top:152px;width:13px;height:16px;border:1px solid #c8c8c8;background:#f4f4f4"></div>
<svg class="a" style="left:170px;top:152px" width="13" height="16"><path d="M6.5 3L10 6.5H3z M6.5 13L10 9.5H3z" fill="#000"/><path d="M1 8h11" stroke="#c8c8c8"/></svg>
<div class="a" style="left:188.6px;top:150.2px;width:91px;height:19.2px;background:#e5e5e5;border:1px solid #adadad"></div>
<div class="t" style="left:191.5px;top:155.32px;font-size:11.2px;">VFR</div>
<svg class="a" style="left:265px;top:155px" width="12" height="10"><path d="M2 3l4 4 4-4" fill="none" stroke="#333" stroke-width="1.1"/></svg>
<div class="a" style="left:283.5px;top:149px;width:25px;height:21.5px;background:#cccccc;border:1px solid #bfbfbf"></div>
<svg class="a" style="left:286px;top:150px" width="20" height="20" viewBox="0 0 24 24"><path d="M13 3l2 1-3 7h-3z" fill="#eee"/><path d="M3 15h18v5H3z" fill="#aaa"/><path d="M5 13h14v3H5z" fill="#bbb"/></svg>
<div class="a" style="left:313px;top:149px;width:25.6px;height:21.5px;background:#e1e1e1;border:1px solid #adadad"></div>
<svg class="a" style="left:315px;top:150px" width="21" height="20" viewBox="0 0 24 24"><rect x="2" y="2" width="18" height="15" fill="#eee" stroke="#888"/><path d="M2 6h18" stroke="#888"/><circle cx="15" cy="16" r="6" fill="#ddd" stroke="#999" stroke-width="2" stroke-dasharray="2 1.5"/><circle cx="15" cy="16" r="2.5" fill="#fff" stroke="#999"/></svg>
<div class="a" style="left:343px;top:149px;width:25.7px;height:21.5px;background:#e1e1e1;border:1px solid #adadad"></div>
<svg class="a" style="left:346px;top:151px" width="19" height="18"><circle cx="9.5" cy="9" r="8" fill="#2a78c8"/><circle cx="9.5" cy="9" r="8" fill="none" stroke="#1a5aa0"/><text x="5.5" y="13.5" font-size="12" font-weight="bold" font-family="Liberation Sans" fill="#fff">?</text></svg>
<div class="t" style="left:2.7px;top:174.24px;font-size:12px;color:#0000ff"><b>Marrakesh Menara Airport (GMMX)</b></div>
<div class="t" style="left:200.5px;top:175.99px;font-size:11px;color:#000">à</div>
<div class="t" style="left:211.9px;top:174.54px;font-size:11.65px;color:#0000ff"><b>Bordeaux-Merignac (LFBD)</b></div>
<div class="t" style="left:2.7px;top:187.65px;font-size:11.4px;"><b>Distance</b></div>
<div class="t" style="left:53.9px;top:188.58px;font-size:10.3px;">865 NM,</div>
<div class="t" style="left:96.8px;top:187.23px;font-size:11.9px;"><b>durée</b></div>
<div class="t" style="left:132.9px;top:188.50px;font-size:10.4px;">6 h 20 m.</div>
<div class="a" style="left:2.1px;top:202.4px;width:367.6px;height:624px;background:#fff;border:1px solid #828790;overflow:hidden">
<div class="a" style="left:0;top:69px;width:16px;height:540px;background:#f0f0f0"></div>
<div class="a" style="left:16px;top:52px;width:352px;height:17px;background:#f0f0f0"></div>
<div class="a" style="left:16px;top:52px;width:352px;height:1px;background:#e3e3e3"></div>
<div class="a" style="left:16px;top:69px;width:352px;height:1px;background:#e3e3e3"></div>
<div class="a" style="left:116.1px;top:0;width:1px;height:70px;background:#e3e3e3"></div>
<div class="a" style="left:216.2px;top:0;width:1px;height:70px;background:#e3e3e3"></div>
<div class="a" style="left:316.2px;top:0;width:1px;height:70px;background:#e3e3e3"></div>
<div class="a" style="left:16px;top:0;width:1px;height:70px;background:#ececec"></div>
<div class="a" style="left:0;top:607.5px;width:366px;height:15.5px;background:#f0f0f0"></div>
<div class="a" style="left:18.2px;top:608px;width:45.4px;height:15px;background:#cdcdcd"></div>
<svg class="a" style="left:3px;top:609px" width="12" height="13"><path d="M8 3L4 6.5L8 10" fill="none" stroke="#555" stroke-width="1.3"/></svg>
<svg class="a" style="left:352px;top:609px" width="12" height="13"><path d="M4 3L8 6.5L4 10" fill="none" stroke="#555" stroke-width="1.3"/></svg>
</div>
<div class="t" style="left:-131.6px;width:400px;text-align:center;top:216.52px;font-size:11.2px;color:#111">Ident</div>
<div class="t" style="left:-31.69999999999999px;width:400px;text-align:center;top:216.52px;font-size:11.2px;color:#111">Région</div>
<div class="t" style="left:68.30000000000001px;width:400px;text-align:center;top:216.52px;font-size:11.2px;color:#111">Nom</div>
<div class="t" style="left:322px;top:216.52px;font-size:11.2px;color:#111;width:47px;overflow:hidden">Procé</div>
<div class="t" style="left:5.5px;top:241.69px;font-size:11px;color:#222">1</div>
<div class="t" style="left:5.5px;top:258.89px;font-size:11px;color:#222">2</div>
<svg class="a" style="left:22px;top:241px" width="13" height="13" viewBox="0 0 13 13"><path d="M6.5 0.3L12.7 6.5L6.5 12.7L0.3 6.5z" fill="#1f4f8a"/><circle cx="6.5" cy="6.5" r="4.68" fill="#1f4f8a"/><path d="M3.0 7.0L10.0 6.0" stroke="#fff" stroke-width="2"/></svg>
<svg class="a" style="left:22px;top:258px" width="13" height="13" viewBox="0 0 13 13"><path d="M6.5 0.3L12.7 6.5L6.5 12.7L0.3 6.5z" fill="#1f4f8a"/><circle cx="6.5" cy="6.5" r="4.68" fill="#1f4f8a"/><path d="M3.5 9.5L9.5 3.5" stroke="#fff" stroke-width="2"/></svg>
<div class="t" style="left:-283.6px;width:400px;text-align:right;top:241.01px;font-size:11.8px;"><b><i><u>GMMX</u></i></b></div>
<div class="t" style="left:-283.6px;width:400px;text-align:right;top:258.21px;font-size:11.8px;"><b><i><u>LFBD</u></i></b></div>
<div class="t" style="left:-184px;width:400px;text-align:right;top:241.52px;font-size:11.2px;">GM</div>
<div class="t" style="left:-184px;width:400px;text-align:right;top:258.72px;font-size:11.2px;">LF</div>
<div class="t" style="left:221.8px;top:241.92px;font-size:11.2px;">Marrakesh Men...</div>
<div class="t" style="left:221.8px;top:258.72px;font-size:11.2px;">Bordeaux-Meri...</div>
<div class="t" style="left:322px;top:241.92px;font-size:11.2px;">Départ</div>
<div class="t" style="left:322px;top:258.72px;font-size:11.2px;"><span style="display:inline-block;width:47px;overflow:hidden">Destination</span></div>
<div class="a" style="left:0;top:835.4px;width:281.8px;height:12px;background:#ff0000"></div>
<div class="t" style="left:0.5px;top:835.57px;font-size:11.5px;color:#fff"><b>Problèmes trouvés. Cliquez ici pour plus de détails.</b></div>
<style>.mo{position:absolute;left:-382px;top:-99px;width:1675px;height:939px}.lM,.lm,.lg,.lI,.lJ,.lb,.lG,.lgr{position:absolute;white-space:pre;font-family:"Liberation Sans",sans-serif}.lM{background:#fff;color:#6a2a50;font-size:11px;font-weight:bold;height:12.8px;line-height:12.8px;padding:0 0.5px;letter-spacing:-0.3px}.lJ{background:#fff;color:#6a2a50;font-size:10.6px;font-weight:bold;font-style:italic;height:12.6px;line-height:12.6px;padding:0 1px;letter-spacing:-0.5px}.lm{background:#fff;color:#6a2a50;font-size:7.3px;font-weight:bold;height:8px;line-height:8px;padding:0 0.6px;letter-spacing:-0.4px}.lb{background:#fff;color:#1a4a8c;font-size:11px;font-weight:bold;height:12.8px;line-height:12.8px;padding:0 0.5px;letter-spacing:-0.5px}.lI{background:#fff;color:#1a4a8c;font-size:10.6px;font-weight:bold;font-style:italic;height:12.6px;line-height:12px;padding:0 1px;letter-spacing:-0.5px;border-bottom:1px solid #1a4a8c}.lbs{position:absolute;white-space:pre;background:#fff;color:#1a4a8c;font-size:7.3px;font-weight:bold;height:8px;line-height:8px;padding:0 0.6px;letter-spacing:-0.4px}.lg{color:#a4a4a4;font-size:7.3px;font-weight:bold;height:8px;line-height:8px;letter-spacing:-0.4px}.lG{color:#8c8c8c;font-size:11px;height:13px;line-height:13px}.lgr{color:#fff;font-size:11px;font-weight:bold;height:13px;line-height:13px}</style>
<div class="a" style="left:382px;top:99px;width:1293px;height:749px;overflow:hidden;background:#000">
<svg width="1293" height="749" viewBox="382 99 1293 749" style="position:absolute;left:0;top:0">
<polygon points="459,90 590,90 486.5,222.8 446,194 459.5,113" fill="#1c0a26" stroke="#982ed8" stroke-width="2.1" stroke-linejoin="miter"/>
<polygon points="692,90 727,111 671,188 723,243 689,327 502.6,327.7 454,358.4 465.6,307.3 458,290.7 440,279.2 441.3,275.4 391.5,237 382,248.5 375,250 375,415 382,416 447,427.4 537,435 609,485 646,494 761,506.5 1052,506.5 1109.4,439.6 1050.7,297.2 1114.7,229.4 1156.2,236.8 1192.5,90 943,90 961,166 813.5,153 816,90" fill="#1c0a26" stroke="#982ed8" stroke-width="2.1" stroke-linejoin="miter"/>
<polygon points="1502,128 1510,142 1539,165 1547,164 1560.4,167 1556,131 1680,182.6 1680,636 1435,636 1435,506.4 1486,464 1473,464 1474,432 1378,380.5 1396,338.7 1432.5,348 1476.4,360 1504,296.6 1445.5,235.2" fill="#1c0a26" stroke="#982ed8" stroke-width="2.1" stroke-linejoin="miter"/>
<polygon points="375,643 382,646 659,786 653,855 375,855" fill="#1c0a26" stroke="#982ed8" stroke-width="2.1" stroke-linejoin="miter"/>
<polygon points="760.4,546 797,563 831,563 837,580 876,580 888,595.5 894,609.6 890,626 898,634 892,640 894,652 914,654 916,648 934.5,644 936.5,639 948.6,636.7 991,650 999,674 1047,654 1120,675.6 1136,658 1168.7,648 1190,643.2 1211,651 1222.5,654 1265.8,759.4 1261.8,855 695.7,855 671,794 720,749" fill="#1c0a26" stroke="#982ed8" stroke-width="2.1" stroke-linejoin="miter"/>
<polyline points="692,90 727,111 816,111" fill="none" stroke="#982ed8" stroke-width="2.1"/>
<polyline points="454,358.4 447,382.7 447,427.4" fill="none" stroke="#982ed8" stroke-width="2.1"/>
<polyline points="723,243 785,307 761,335 761,506.5" fill="none" stroke="#982ed8" stroke-width="2.1"/>
<polyline points="961,166 972,199 1156.2,236.8" fill="none" stroke="#982ed8" stroke-width="2.1"/>
<line x1="427.8" y1="99" x2="427.8" y2="850" stroke="#d0d0d0" stroke-width="1.3" opacity="0.85"/>
<line x1="809" y1="99" x2="809" y2="850" stroke="#d0d0d0" stroke-width="1.3" opacity="0.85"/>
<line x1="1000" y1="99" x2="1000" y2="850" stroke="#d0d0d0" stroke-width="1.3" opacity="0.85"/>
<line x1="1190.5" y1="99" x2="1190.5" y2="850" stroke="#d0d0d0" stroke-width="1.3" opacity="0.85"/>
<line x1="1381.2" y1="99" x2="1381.2" y2="850" stroke="#d0d0d0" stroke-width="1.3" opacity="0.85"/>
<line x1="1571.5" y1="99" x2="1571.5" y2="850" stroke="#d0d0d0" stroke-width="1.3" opacity="0.85"/>
<line x1="618.8" y1="99" x2="618.8" y2="850" stroke="#e0d000" stroke-width="1.3"/>
<line x1="382" y1="244.1" x2="1675" y2="244.1" stroke="#d0d0d0" stroke-width="1.3" opacity="0.85"/>
<line x1="382" y1="506.4" x2="1675" y2="506.4" stroke="#d0d0d0" stroke-width="1.3" opacity="0.85"/>
<line x1="382" y1="765.4" x2="1675" y2="765.4" stroke="#d0d0d0" stroke-width="1.3" opacity="0.85"/>
<path d="M1192 99L846 345L800 381L647 506.6L440.7 676L382 745" fill="none" stroke="#000" stroke-width="2" stroke-dasharray="6 4"/>
<path d="M1476 230.7L1588 290.6L1675 304.6" fill="none" stroke="#000" stroke-width="2" stroke-dasharray="6 4"/>
<line x1="513" y1="267.5" x2="535" y2="267.5" stroke="#0a7a0a" stroke-width="4.2" stroke-linecap="round"/>
<line x1="855" y1="310.6" x2="903" y2="372.5" stroke="#0a7a0a" stroke-width="4.2" stroke-linecap="round"/>
<line x1="547.7" y1="414.4" x2="567.7" y2="428.4" stroke="#0a7a0a" stroke-width="4.2" stroke-linecap="round"/>
<line x1="626.7" y1="434.4" x2="621" y2="450" stroke="#0a7a0a" stroke-width="4.2" stroke-linecap="round"/>
<line x1="1097" y1="141" x2="1117" y2="157" stroke="#0a7a0a" stroke-width="4.2" stroke-linecap="round"/>
<line x1="1384.3" y1="362.5" x2="1404.3" y2="374.5" stroke="#0a7a0a" stroke-width="4.2" stroke-linecap="round"/>
<line x1="1596" y1="378.5" x2="1638" y2="416.4" stroke="#0a7a0a" stroke-width="4.2" stroke-linecap="round"/>
<line x1="1031" y1="332.6" x2="1050" y2="356" stroke="#0a7a0a" stroke-width="4.2" stroke-linecap="round"/>
<line x1="1170" y1="582" x2="1184.9" y2="603.6" stroke="#0a7a0a" stroke-width="4.2" stroke-linecap="round"/>
<line x1="1524" y1="178.8" x2="1544" y2="205" stroke="#0a7a0a" stroke-width="4.2" stroke-linecap="round"/>
<line x1="1542" y1="338.6" x2="1555" y2="366" stroke="#0a7a0a" stroke-width="4.2" stroke-linecap="round"/>
<line x1="1578" y1="312.6" x2="1585" y2="338" stroke="#0a7a0a" stroke-width="4.2" stroke-linecap="round"/>
<line x1="1153.3" y1="758.6" x2="1147" y2="782" stroke="#0a7a0a" stroke-width="4.2" stroke-linecap="round"/>
<circle cx="747" cy="204.8" r="6.2" fill="none" stroke="#8b0000" stroke-width="1.3"/><circle cx="747" cy="204.8" r="1.3" fill="#8b0000"/>
<circle cx="893" cy="258" r="6.2" fill="none" stroke="#8b0000" stroke-width="1.3"/><circle cx="893" cy="258" r="1.3" fill="#8b0000"/>
<circle cx="732.6" cy="317.8" r="6.2" fill="none" stroke="#8b0000" stroke-width="1.3"/><circle cx="732.6" cy="317.8" r="1.3" fill="#8b0000"/>
<circle cx="849" cy="350.5" r="6.2" fill="none" stroke="#8b0000" stroke-width="1.3"/><circle cx="849" cy="350.5" r="1.3" fill="#8b0000"/>
<circle cx="814" cy="367.7" r="6.2" fill="none" stroke="#8b0000" stroke-width="1.3"/><circle cx="814" cy="367.7" r="1.3" fill="#8b0000"/>
<circle cx="901" cy="373.3" r="6.2" fill="none" stroke="#8b0000" stroke-width="1.3"/><circle cx="901" cy="373.3" r="1.3" fill="#8b0000"/>
<circle cx="843" cy="380.5" r="6.2" fill="none" stroke="#8b0000" stroke-width="1.3"/><circle cx="843" cy="380.5" r="1.3" fill="#8b0000"/>
<circle cx="938" cy="380.5" r="6.2" fill="none" stroke="#8b0000" stroke-width="1.3"/><circle cx="938" cy="380.5" r="1.3" fill="#8b0000"/>
<circle cx="560.5" cy="423.2" r="6.2" fill="none" stroke="#8b0000" stroke-width="1.3"/><circle cx="560.5" cy="423.2" r="1.3" fill="#8b0000"/>
<circle cx="586.8" cy="424.8" r="6.2" fill="none" stroke="#8b0000" stroke-width="1.3"/><circle cx="586.8" cy="424.8" r="1.3" fill="#8b0000"/>
<circle cx="646.7" cy="419.6" r="6.2" fill="none" stroke="#8b0000" stroke-width="1.3"/><circle cx="646.7" cy="419.6" r="1.3" fill="#8b0000"/>
<circle cx="1011.6" cy="266.7" r="6.2" fill="none" stroke="#8b0000" stroke-width="1.3"/><circle cx="1011.6" cy="266.7" r="1.3" fill="#8b0000"/>
<circle cx="1082" cy="129" r="6.2" fill="none" stroke="#8b0000" stroke-width="1.3"/><circle cx="1082" cy="129" r="1.3" fill="#8b0000"/>
<circle cx="1114.8" cy="155.7" r="6.2" fill="none" stroke="#8b0000" stroke-width="1.3"/><circle cx="1114.8" cy="155.7" r="1.3" fill="#8b0000"/>
<circle cx="1039.8" cy="340.5" r="6.2" fill="none" stroke="#8b0000" stroke-width="1.3"/><circle cx="1039.8" cy="340.5" r="1.3" fill="#8b0000"/>
<circle cx="1667.8" cy="230" r="6.2" fill="none" stroke="#8b0000" stroke-width="1.3"/><circle cx="1667.8" cy="230" r="1.3" fill="#8b0000"/>
<circle cx="1241" cy="421.6" r="6.2" fill="none" stroke="#8b0000" stroke-width="1.3"/><circle cx="1241" cy="421.6" r="1.3" fill="#8b0000"/>
<circle cx="1384" cy="362" r="6.2" fill="none" stroke="#8b0000" stroke-width="1.3"/><circle cx="1384" cy="362" r="1.3" fill="#8b0000"/>
<circle cx="1546" cy="206.8" r="6.2" fill="none" stroke="#8b0000" stroke-width="1.3"/><circle cx="1546" cy="206.8" r="1.3" fill="#8b0000"/>
<circle cx="1557.2" cy="369.7" r="6.2" fill="none" stroke="#8b0000" stroke-width="1.3"/><circle cx="1557.2" cy="369.7" r="1.3" fill="#8b0000"/>
<circle cx="1459.4" cy="282.7" r="6.2" fill="none" stroke="#8b0000" stroke-width="1.3"/><circle cx="1459.4" cy="282.7" r="1.3" fill="#8b0000"/>
<circle cx="1596" cy="378.5" r="6.2" fill="none" stroke="#8b0000" stroke-width="1.3"/><circle cx="1596" cy="378.5" r="1.3" fill="#8b0000"/>
<circle cx="922.3" cy="483" r="6.2" fill="none" stroke="#8b0000" stroke-width="1.3"/><circle cx="922.3" cy="483" r="1.3" fill="#8b0000"/>
<circle cx="520.4" cy="783.7" r="6.2" fill="none" stroke="#8b0000" stroke-width="1.3"/><circle cx="520.4" cy="783.7" r="1.3" fill="#8b0000"/>
<circle cx="1001.3" cy="650.1" r="6.2" fill="none" stroke="#8b0000" stroke-width="1.3"/><circle cx="1001.3" cy="650.1" r="1.3" fill="#8b0000"/>
<circle cx="1153.3" cy="758.6" r="6.2" fill="none" stroke="#8b0000" stroke-width="1.3"/><circle cx="1153.3" cy="758.6" r="1.3" fill="#8b0000"/>
<circle cx="1147" cy="782" r="6.2" fill="none" stroke="#8b0000" stroke-width="1.3"/><circle cx="1147" cy="782" r="1.3" fill="#8b0000"/>
<circle cx="1589" cy="345" r="6.2" fill="none" stroke="#8b0000" stroke-width="1.3"/><circle cx="1589" cy="345" r="1.3" fill="#8b0000"/>
<circle cx="422" cy="325" r="6.2" fill="none" stroke="#8b0000" stroke-width="1.3"/><circle cx="422" cy="325" r="1.3" fill="#8b0000"/>
<circle cx="626.7" cy="432.5" r="6.2" fill="none" stroke="#8b0000" stroke-width="1.3"/><circle cx="626.7" cy="432.5" r="1.3" fill="#8b0000"/>
<circle cx="391" cy="834" r="6.2" fill="none" stroke="#8b0000" stroke-width="1.3"/><circle cx="391" cy="834" r="1.3" fill="#8b0000"/>
<circle cx="582.8" cy="121.0" r="4.4" fill="#fff" stroke="#7d4262" stroke-width="1.7"/>
<circle cx="741.3" cy="155.0" r="4.4" fill="#fff" stroke="#7d4262" stroke-width="1.7"/>
<circle cx="1004.8" cy="146.0" r="4.4" fill="#fff" stroke="#7d4262" stroke-width="1.7"/>
<circle cx="438.0" cy="266.0" r="4.4" fill="#fff" stroke="#7d4262" stroke-width="1.7"/>
<circle cx="692.2" cy="268.0" r="4.4" fill="#fff" stroke="#7d4262" stroke-width="1.7"/>
<circle cx="844.3" cy="281.9" r="4.4" fill="#fff" stroke="#7d4262" stroke-width="1.7"/>
<circle cx="975.7" cy="275.0" r="4.4" fill="#fff" stroke="#7d4262" stroke-width="1.7"/>
<circle cx="924.2" cy="304.6" r="4.4" fill="#fff" stroke="#7d4262" stroke-width="1.7"/>
<circle cx="1022.6" cy="289.0" r="4.4" fill="#fff" stroke="#7d4262" stroke-width="1.7"/>
<circle cx="947.0" cy="346.5" r="4.4" fill="#fff" stroke="#7d4262" stroke-width="1.7"/>
<circle cx="485.8" cy="389.7" r="4.4" fill="#fff" stroke="#7d4262" stroke-width="1.7"/>
<circle cx="670.3" cy="355.3" r="4.4" fill="#fff" stroke="#7d4262" stroke-width="1.7"/>
<circle cx="655.5" cy="374.5" r="4.4" fill="#fff" stroke="#7d4262" stroke-width="1.7"/>
<circle cx="633.5" cy="382.5" r="4.4" fill="#fff" stroke="#7d4262" stroke-width="1.7"/>
<circle cx="649.5" cy="407.6" r="4.4" fill="#fff" stroke="#7d4262" stroke-width="1.7"/>
<circle cx="761.3" cy="392.5" r="4.4" fill="#fff" stroke="#7d4262" stroke-width="1.7"/>
<circle cx="823.0" cy="387.7" r="4.4" fill="#fff" stroke="#7d4262" stroke-width="1.7"/>
<circle cx="698.2" cy="421.6" r="4.4" fill="#fff" stroke="#7d4262" stroke-width="1.7"/>
<circle cx="717.4" cy="434.4" r="4.4" fill="#fff" stroke="#7d4262" stroke-width="1.7"/>
<circle cx="606.4" cy="429.6" r="4.4" fill="#fff" stroke="#7d4262" stroke-width="1.7"/>
<circle cx="577.6" cy="442.4" r="4.4" fill="#fff" stroke="#7d4262" stroke-width="1.7"/>
<circle cx="632.7" cy="449.5" r="4.4" fill="#fff" stroke="#7d4262" stroke-width="1.7"/>
<circle cx="853.0" cy="442.4" r="4.4" fill="#fff" stroke="#7d4262" stroke-width="1.7"/>
<circle cx="818.4" cy="454.3" r="4.4" fill="#fff" stroke="#7d4262" stroke-width="1.7"/>
<circle cx="888.3" cy="453.5" r="4.4" fill="#fff" stroke="#7d4262" stroke-width="1.7"/>
<circle cx="511.8" cy="463.0" r="4.4" fill="#fff" stroke="#7d4262" stroke-width="1.7"/>
<circle cx="982.0" cy="391.7" r="4.4" fill="#fff" stroke="#7d4262" stroke-width="1.7"/>
<circle cx="990.0" cy="459.0" r="4.4" fill="#fff" stroke="#7d4262" stroke-width="1.7"/>
<circle cx="1279.0" cy="168.0" r="4.4" fill="#fff" stroke="#7d4262" stroke-width="1.7"/>
<circle cx="1444.2" cy="125.7" r="4.4" fill="#fff" stroke="#7d4262" stroke-width="1.7"/>
<circle cx="1517.3" cy="138.0" r="4.4" fill="#fff" stroke="#7d4262" stroke-width="1.7"/>
<circle cx="1553.2" cy="155.0" r="4.4" fill="#fff" stroke="#7d4262" stroke-width="1.7"/>
<circle cx="1505.3" cy="172.9" r="4.4" fill="#fff" stroke="#7d4262" stroke-width="1.7"/>
<circle cx="1648.0" cy="111.8" r="4.4" fill="#fff" stroke="#7d4262" stroke-width="1.7"/>
<circle cx="1383.0" cy="179.6" r="4.4" fill="#fff" stroke="#7d4262" stroke-width="1.7"/>
<circle cx="1456.2" cy="222.0" r="4.4" fill="#fff" stroke="#7d4262" stroke-width="1.7"/>
<circle cx="1524.0" cy="244.7" r="4.4" fill="#fff" stroke="#7d4262" stroke-width="1.7"/>
<circle cx="1459.4" cy="282.7" r="4.4" fill="#fff" stroke="#7d4262" stroke-width="1.7"/>
<circle cx="1551.2" cy="304.6" r="4.4" fill="#fff" stroke="#7d4262" stroke-width="1.7"/>
<circle cx="1217.8" cy="339.0" r="4.4" fill="#fff" stroke="#7d4262" stroke-width="1.7"/>
<circle cx="1244.6" cy="347.7" r="4.4" fill="#fff" stroke="#7d4262" stroke-width="1.7"/>
<circle cx="1199.9" cy="456.3" r="4.4" fill="#fff" stroke="#7d4262" stroke-width="1.7"/>
<circle cx="736.2" cy="478.0" r="4.4" fill="#fff" stroke="#7d4262" stroke-width="1.7"/>
<circle cx="976.2" cy="501.2" r="4.4" fill="#fff" stroke="#7d4262" stroke-width="1.7"/>
<circle cx="584.4" cy="501.2" r="4.4" fill="#fff" stroke="#7d4262" stroke-width="1.7"/>
<circle cx="1042.8" cy="491.9" r="4.4" fill="#fff" stroke="#7d4262" stroke-width="1.7"/>
<circle cx="1010.0" cy="530.3" r="4.4" fill="#fff" stroke="#7d4262" stroke-width="1.7"/>
<circle cx="1094.2" cy="553.4" r="4.4" fill="#fff" stroke="#7d4262" stroke-width="1.7"/>
<circle cx="1022.7" cy="625.0" r="4.4" fill="#fff" stroke="#7d4262" stroke-width="1.7"/>
<circle cx="1001.3" cy="650.1" r="4.4" fill="#fff" stroke="#7d4262" stroke-width="1.7"/>
<circle cx="653.6" cy="675.6" r="4.4" fill="#fff" stroke="#7d4262" stroke-width="1.7"/>
<circle cx="635.8" cy="766.7" r="4.4" fill="#fff" stroke="#7d4262" stroke-width="1.7"/>
<circle cx="514.8" cy="775.2" r="4.4" fill="#fff" stroke="#7d4262" stroke-width="1.7"/>
<circle cx="968.9" cy="745.2" r="4.4" fill="#fff" stroke="#7d4262" stroke-width="1.7"/>
<circle cx="858.4" cy="771.9" r="4.4" fill="#fff" stroke="#7d4262" stroke-width="1.7"/>
<circle cx="1117.3" cy="707.2" r="4.4" fill="#fff" stroke="#7d4262" stroke-width="1.7"/>
<circle cx="1168.7" cy="705.6" r="4.4" fill="#fff" stroke="#7d4262" stroke-width="1.7"/>
<circle cx="1199.8" cy="728.2" r="4.4" fill="#fff" stroke="#7d4262" stroke-width="1.7"/>
<circle cx="1188.1" cy="757.8" r="4.4" fill="#fff" stroke="#7d4262" stroke-width="1.7"/>
<circle cx="1224.5" cy="757.8" r="4.4" fill="#fff" stroke="#7d4262" stroke-width="1.7"/>
<circle cx="1048.5" cy="768.3" r="4.4" fill="#fff" stroke="#7d4262" stroke-width="1.7"/>
<circle cx="1116.0" cy="829.0" r="4.4" fill="#fff" stroke="#7d4262" stroke-width="1.7"/>
<circle cx="1142.4" cy="845.2" r="4.4" fill="#fff" stroke="#7d4262" stroke-width="1.7"/>
<circle cx="857.0" cy="845.0" r="4.4" fill="#fff" stroke="#7d4262" stroke-width="1.7"/>
<circle cx="826.4" cy="147.0" r="4.6" fill="#fff" stroke="#8a8a8a" stroke-width="1.6"/>
<circle cx="922.0" cy="107.0" r="4.6" fill="#fff" stroke="#8a8a8a" stroke-width="1.6"/>
<circle cx="645.5" cy="272.3" r="4.6" fill="#fff" stroke="#8a8a8a" stroke-width="1.6"/>
<circle cx="783.3" cy="313.4" r="4.6" fill="#fff" stroke="#8a8a8a" stroke-width="1.6"/>
<circle cx="793.2" cy="331.4" r="4.6" fill="#fff" stroke="#8a8a8a" stroke-width="1.6"/>
<circle cx="527.7" cy="357.7" r="4.6" fill="#fff" stroke="#8a8a8a" stroke-width="1.6"/>
<circle cx="408.0" cy="373.3" r="4.6" fill="#fff" stroke="#8a8a8a" stroke-width="1.6"/>
<circle cx="708.2" cy="449.5" r="4.6" fill="#fff" stroke="#8a8a8a" stroke-width="1.6"/>
<circle cx="807.2" cy="465.5" r="4.6" fill="#fff" stroke="#8a8a8a" stroke-width="1.6"/>
<circle cx="569.7" cy="462.3" r="4.6" fill="#fff" stroke="#8a8a8a" stroke-width="1.6"/>
<circle cx="477.1" cy="475.3" r="4.6" fill="#fff" stroke="#8a8a8a" stroke-width="1.6"/>
<circle cx="637.8" cy="533.5" r="4.6" fill="#fff" stroke="#8a8a8a" stroke-width="1.6"/>
<circle cx="861.6" cy="532.7" r="4.6" fill="#fff" stroke="#8a8a8a" stroke-width="1.6"/>
<circle cx="1630.0" cy="101.8" r="4.6" fill="#fff" stroke="#8a8a8a" stroke-width="1.6"/>
<circle cx="1373.6" cy="240.7" r="4.6" fill="#fff" stroke="#8a8a8a" stroke-width="1.6"/>
<circle cx="1031.5" cy="594.7" r="4.6" fill="#fff" stroke="#8a8a8a" stroke-width="1.6"/>
<circle cx="1139.1" cy="623.4" r="4.6" fill="#fff" stroke="#8a8a8a" stroke-width="1.6"/>
<circle cx="1058.2" cy="777.6" r="4.6" fill="#fff" stroke="#8a8a8a" stroke-width="1.6"/>
<circle cx="852.3" cy="242.7" r="4.6" fill="#fff" stroke="#8a8a8a" stroke-width="1.6"/>
<g transform="translate(656.7 111.0)"><path d="M0 -7.2L7.2 0L0 7.2L-7.2 0z" fill="#7d4262"/><circle r="6.4" fill="#7d4262"/><path d="M-3.4 -1.2L3.4 1.2" stroke="#fff" stroke-width="2" transform="rotate(-12)"/></g>
<g transform="translate(809.0 122.0)"><path d="M0 -7.2L7.2 0L0 7.2L-7.2 0z" fill="#7d4262"/><circle r="6.4" fill="#7d4262"/><path d="M-3.4 -1.2L3.4 1.2" stroke="#fff" stroke-width="2" transform="rotate(-12)"/></g>
<g transform="translate(711.4 147.0)"><path d="M0 -7.2L7.2 0L0 7.2L-7.2 0z" fill="#7d4262"/><circle r="6.4" fill="#7d4262"/><path d="M-3.4 -1.2L3.4 1.2" stroke="#fff" stroke-width="2" transform="rotate(-12)"/></g>
<g transform="translate(762.5 137.7)"><path d="M0 -7.2L7.2 0L0 7.2L-7.2 0z" fill="#7d4262"/><circle r="6.4" fill="#7d4262"/><path d="M-3.4 -1.2L3.4 1.2" stroke="#fff" stroke-width="2" transform="rotate(-12)"/></g>
<g transform="translate(900.0 151.0)"><path d="M0 -7.2L7.2 0L0 7.2L-7.2 0z" fill="#7d4262"/><circle r="6.4" fill="#7d4262"/><path d="M-3.4 -1.2L3.4 1.2" stroke="#fff" stroke-width="2" transform="rotate(-12)"/></g>
<g transform="translate(824.4 162.0)"><path d="M0 -7.2L7.2 0L0 7.2L-7.2 0z" fill="#7d4262"/><circle r="6.4" fill="#7d4262"/><path d="M-3.4 -1.2L3.4 1.2" stroke="#fff" stroke-width="2" transform="rotate(-12)"/></g>
<g transform="translate(949.0 183.6)"><path d="M0 -7.2L7.2 0L0 7.2L-7.2 0z" fill="#7d4262"/><circle r="6.4" fill="#7d4262"/><path d="M-3.4 -1.2L3.4 1.2" stroke="#fff" stroke-width="2" transform="rotate(-12)"/></g>
<g transform="translate(923.0 196.0)"><path d="M0 -7.2L7.2 0L0 7.2L-7.2 0z" fill="#7d4262"/><circle r="6.4" fill="#7d4262"/><path d="M-3.4 -1.2L3.4 1.2" stroke="#fff" stroke-width="2" transform="rotate(-12)"/></g>
<g transform="translate(832.4 221.0)"><path d="M0 -7.2L7.2 0L0 7.2L-7.2 0z" fill="#7d4262"/><circle r="6.4" fill="#7d4262"/><path d="M-3.4 -1.2L3.4 1.2" stroke="#fff" stroke-width="2" transform="rotate(-12)"/></g>
<g transform="translate(611.6 304.6)"><path d="M0 -7.2L7.2 0L0 7.2L-7.2 0z" fill="#7d4262"/><circle r="6.4" fill="#7d4262"/><path d="M-3.4 -1.2L3.4 1.2" stroke="#fff" stroke-width="2" transform="rotate(-12)"/></g>
<g transform="translate(570.8 320.6)"><path d="M0 -7.2L7.2 0L0 7.2L-7.2 0z" fill="#7d4262"/><circle r="6.4" fill="#7d4262"/><path d="M-3.4 -1.2L3.4 1.2" stroke="#fff" stroke-width="2" transform="rotate(-12)"/></g>
<g transform="translate(732.6 326.6)"><path d="M0 -7.2L7.2 0L0 7.2L-7.2 0z" fill="#7d4262"/><circle r="6.4" fill="#7d4262"/><path d="M-3.4 -1.2L3.4 1.2" stroke="#fff" stroke-width="2" transform="rotate(-12)"/></g>
<g transform="translate(806.0 276.7)"><path d="M0 -7.2L7.2 0L0 7.2L-7.2 0z" fill="#7d4262"/><circle r="6.4" fill="#7d4262"/><path d="M-3.4 -1.2L3.4 1.2" stroke="#fff" stroke-width="2" transform="rotate(-12)"/></g>
<g transform="translate(1021.6 266.7)"><path d="M0 -7.2L7.2 0L0 7.2L-7.2 0z" fill="#7d4262"/><circle r="6.4" fill="#7d4262"/><path d="M-3.4 -1.2L3.4 1.2" stroke="#fff" stroke-width="2" transform="rotate(-12)"/></g>
<g transform="translate(1001.0 304.6)"><path d="M0 -7.2L7.2 0L0 7.2L-7.2 0z" fill="#7d4262"/><circle r="6.4" fill="#7d4262"/><path d="M-3.4 -1.2L3.4 1.2" stroke="#fff" stroke-width="2" transform="rotate(-12)"/></g>
<g transform="translate(995.7 380.5)"><path d="M0 -7.2L7.2 0L0 7.2L-7.2 0z" fill="#7d4262"/><circle r="6.4" fill="#7d4262"/><path d="M-3.4 -1.2L3.4 1.2" stroke="#fff" stroke-width="2" transform="rotate(-12)"/></g>
<g transform="translate(997.0 400.4)"><path d="M0 -7.2L7.2 0L0 7.2L-7.2 0z" fill="#7d4262"/><circle r="6.4" fill="#7d4262"/><path d="M-3.4 -1.2L3.4 1.2" stroke="#fff" stroke-width="2" transform="rotate(-12)"/></g>
<g transform="translate(984.5 425.6)"><path d="M0 -7.2L7.2 0L0 7.2L-7.2 0z" fill="#7d4262"/><circle r="6.4" fill="#7d4262"/><path d="M-3.4 -1.2L3.4 1.2" stroke="#fff" stroke-width="2" transform="rotate(-12)"/></g>
<g transform="translate(692.6 383.3)"><path d="M0 -7.2L7.2 0L0 7.2L-7.2 0z" fill="#7d4262"/><circle r="6.4" fill="#7d4262"/><path d="M-3.4 -1.2L3.4 1.2" stroke="#fff" stroke-width="2" transform="rotate(-12)"/></g>
<g transform="translate(780.5 407.6)"><path d="M0 -7.2L7.2 0L0 7.2L-7.2 0z" fill="#7d4262"/><circle r="6.4" fill="#7d4262"/><path d="M-3.4 -1.2L3.4 1.2" stroke="#fff" stroke-width="2" transform="rotate(-12)"/></g>
<g transform="translate(1098.0 196.8)"><path d="M0 -7.2L7.2 0L0 7.2L-7.2 0z" fill="#7d4262"/><circle r="6.4" fill="#7d4262"/><path d="M-3.4 -1.2L3.4 1.2" stroke="#fff" stroke-width="2" transform="rotate(-12)"/></g>
<g transform="translate(1290.5 109.8)"><path d="M0 -7.2L7.2 0L0 7.2L-7.2 0z" fill="#7d4262"/><circle r="6.4" fill="#7d4262"/><path d="M-3.4 -1.2L3.4 1.2" stroke="#fff" stroke-width="2" transform="rotate(-12)"/></g>
<g transform="translate(1451.4 101.0)"><path d="M0 -7.2L7.2 0L0 7.2L-7.2 0z" fill="#7d4262"/><circle r="6.4" fill="#7d4262"/><path d="M-3.4 -1.2L3.4 1.2" stroke="#fff" stroke-width="2" transform="rotate(-12)"/></g>
<g transform="translate(1556.0 196.0)"><path d="M0 -7.2L7.2 0L0 7.2L-7.2 0z" fill="#7d4262"/><circle r="6.4" fill="#7d4262"/><path d="M-3.4 -1.2L3.4 1.2" stroke="#fff" stroke-width="2" transform="rotate(-12)"/></g>
<g transform="translate(1224.6 246.7)"><path d="M0 -7.2L7.2 0L0 7.2L-7.2 0z" fill="#7d4262"/><circle r="6.4" fill="#7d4262"/><path d="M-3.4 -1.2L3.4 1.2" stroke="#fff" stroke-width="2" transform="rotate(-12)"/></g>
<g transform="translate(1589.2 237.5)"><path d="M0 -7.2L7.2 0L0 7.2L-7.2 0z" fill="#7d4262"/><circle r="6.4" fill="#7d4262"/><path d="M-3.4 -1.2L3.4 1.2" stroke="#fff" stroke-width="2" transform="rotate(-12)"/></g>
<g transform="translate(1142.0 290.6)"><path d="M0 -7.2L7.2 0L0 7.2L-7.2 0z" fill="#7d4262"/><circle r="6.4" fill="#7d4262"/><path d="M-3.4 -1.2L3.4 1.2" stroke="#fff" stroke-width="2" transform="rotate(-12)"/></g>
<g transform="translate(1339.2 296.6)"><path d="M0 -7.2L7.2 0L0 7.2L-7.2 0z" fill="#7d4262"/><circle r="6.4" fill="#7d4262"/><path d="M-3.4 -1.2L3.4 1.2" stroke="#fff" stroke-width="2" transform="rotate(-12)"/></g>
<g transform="translate(1394.3 344.5)"><path d="M0 -7.2L7.2 0L0 7.2L-7.2 0z" fill="#7d4262"/><circle r="6.4" fill="#7d4262"/><path d="M-3.4 -1.2L3.4 1.2" stroke="#fff" stroke-width="2" transform="rotate(-12)"/></g>
<g transform="translate(1573.2 334.6)"><path d="M0 -7.2L7.2 0L0 7.2L-7.2 0z" fill="#7d4262"/><circle r="6.4" fill="#7d4262"/><path d="M-3.4 -1.2L3.4 1.2" stroke="#fff" stroke-width="2" transform="rotate(-12)"/></g>
<g transform="translate(1138.8 460.3)"><path d="M0 -7.2L7.2 0L0 7.2L-7.2 0z" fill="#7d4262"/><circle r="6.4" fill="#7d4262"/><path d="M-3.4 -1.2L3.4 1.2" stroke="#fff" stroke-width="2" transform="rotate(-12)"/></g>
<g transform="translate(941.8 483.0)"><path d="M0 -7.2L7.2 0L0 7.2L-7.2 0z" fill="#7d4262"/><circle r="6.4" fill="#7d4262"/><path d="M-3.4 -1.2L3.4 1.2" stroke="#fff" stroke-width="2" transform="rotate(-12)"/></g>
<g transform="translate(828.4 504.4)"><path d="M0 -7.2L7.2 0L0 7.2L-7.2 0z" fill="#7d4262"/><circle r="6.4" fill="#7d4262"/><path d="M-3.4 -1.2L3.4 1.2" stroke="#fff" stroke-width="2" transform="rotate(-12)"/></g>
<g transform="translate(701.0 559.4)"><path d="M0 -7.2L7.2 0L0 7.2L-7.2 0z" fill="#7d4262"/><circle r="6.4" fill="#7d4262"/><path d="M-3.4 -1.2L3.4 1.2" stroke="#fff" stroke-width="2" transform="rotate(-12)"/></g>
<g transform="translate(479.2 618.5)"><path d="M0 -7.2L7.2 0L0 7.2L-7.2 0z" fill="#7d4262"/><circle r="6.4" fill="#7d4262"/><path d="M-3.4 -1.2L3.4 1.2" stroke="#fff" stroke-width="2" transform="rotate(-12)"/></g>
<g transform="translate(556.5 744.8)"><path d="M0 -7.2L7.2 0L0 7.2L-7.2 0z" fill="#7d4262"/><circle r="6.4" fill="#7d4262"/><path d="M-3.4 -1.2L3.4 1.2" stroke="#fff" stroke-width="2" transform="rotate(-12)"/></g>
<g transform="translate(709.9 759.4)"><path d="M0 -7.2L7.2 0L0 7.2L-7.2 0z" fill="#7d4262"/><circle r="6.4" fill="#7d4262"/><path d="M-3.4 -1.2L3.4 1.2" stroke="#fff" stroke-width="2" transform="rotate(-12)"/></g>
<g transform="translate(972.9 665.9)"><path d="M0 -7.2L7.2 0L0 7.2L-7.2 0z" fill="#7d4262"/><circle r="6.4" fill="#7d4262"/><path d="M-3.4 -1.2L3.4 1.2" stroke="#fff" stroke-width="2" transform="rotate(-12)"/></g>
<g transform="translate(1211.2 698.7)"><path d="M0 -7.2L7.2 0L0 7.2L-7.2 0z" fill="#7d4262"/><circle r="6.4" fill="#7d4262"/><path d="M-3.4 -1.2L3.4 1.2" stroke="#fff" stroke-width="2" transform="rotate(-12)"/></g>
<g transform="translate(455.7 843.2)"><path d="M0 -7.2L7.2 0L0 7.2L-7.2 0z" fill="#7d4262"/><circle r="6.4" fill="#7d4262"/><path d="M-3.4 -1.2L3.4 1.2" stroke="#fff" stroke-width="2" transform="rotate(-12)"/></g>
<g transform="translate(731.4 198.0)"><circle r="9.9" fill="#ffff00"/><path d="M0 -6.9L6.9 0L0 6.9L-6.9 0z" fill="#1a4a8c"/><circle r="5.4" fill="#1a4a8c"/><path d="M-3.4 -1.1L3.4 1.1" stroke="#fff" stroke-width="2"/></g>
<g transform="translate(879.0 340.6)"><circle r="9.9" fill="#ffff00"/><path d="M0 -6.9L6.9 0L0 6.9L-6.9 0z" fill="#1a4a8c"/><circle r="5.4" fill="#1a4a8c"/><path d="M-3.4 -1.1L3.4 1.1" stroke="#fff" stroke-width="2"/></g>
<g transform="translate(538.5 407.6)"><circle r="9.9" fill="#ffff00"/><path d="M0 -6.9L6.9 0L0 6.9L-6.9 0z" fill="#1a4a8c"/><circle r="5.4" fill="#1a4a8c"/><path d="M-3.4 -1.1L3.4 1.1" stroke="#fff" stroke-width="2"/></g>
<g transform="translate(618.4 458.3)"><circle r="9.9" fill="#ffff00"/><path d="M0 -6.9L6.9 0L0 6.9L-6.9 0z" fill="#1a4a8c"/><circle r="5.4" fill="#1a4a8c"/><path d="M-3.4 -1.1L3.4 1.1" stroke="#fff" stroke-width="2"/></g>
<g transform="translate(1090.9 135.7)"><circle r="9.9" fill="#ffff00"/><path d="M0 -6.9L6.9 0L0 6.9L-6.9 0z" fill="#1a4a8c"/><circle r="5.4" fill="#1a4a8c"/><path d="M-3.4 -1.1L3.4 1.1" stroke="#fff" stroke-width="2"/></g>
<g transform="translate(1373.2 353.7)"><circle r="9.9" fill="#ffff00"/><path d="M0 -6.9L6.9 0L0 6.9L-6.9 0z" fill="#1a4a8c"/><circle r="5.4" fill="#1a4a8c"/><path d="M-3.4 -1.1L3.4 1.1" stroke="#fff" stroke-width="2"/></g>
<g transform="translate(1612.0 392.5)"><circle r="9.9" fill="#ffff00"/><path d="M0 -6.9L6.9 0L0 6.9L-6.9 0z" fill="#1a4a8c"/><circle r="5.4" fill="#1a4a8c"/><path d="M-3.4 -1.1L3.4 1.1" stroke="#fff" stroke-width="2"/></g>
<g transform="translate(1642.0 374.5)"><circle r="9.9" fill="#ffff00"/><path d="M0 -6.9L6.9 0L0 6.9L-6.9 0z" fill="#1a4a8c"/><circle r="5.4" fill="#1a4a8c"/><path d="M-3.4 -1.1L3.4 1.1" stroke="#fff" stroke-width="2"/></g>
<g transform="translate(1055.0 361.7)"><circle r="9.9" fill="#ffff00"/><path d="M0 -6.9L6.9 0L0 6.9L-6.9 0z" fill="#1a4a8c"/><circle r="5.4" fill="#1a4a8c"/><path d="M-3.4 -1.1L3.4 1.1" stroke="#fff" stroke-width="2"/></g>
<g transform="translate(1257.4 421.6)"><circle r="9.9" fill="#ffff00"/><path d="M0 -6.9L6.9 0L0 6.9L-6.9 0z" fill="#1a4a8c"/><circle r="5.4" fill="#1a4a8c"/><path d="M-3.4 -1.1L3.4 1.1" stroke="#fff" stroke-width="2"/></g>
<g transform="translate(1058.1 450.3)"><circle r="9.9" fill="#ffff00"/><path d="M0 -6.9L6.9 0L0 6.9L-6.9 0z" fill="#1a4a8c"/><circle r="5.4" fill="#1a4a8c"/><path d="M-3.4 -1.1L3.4 1.1" stroke="#fff" stroke-width="2"/></g>
<g transform="translate(1165.0 574.4)"><circle r="9.9" fill="#ffff00"/><path d="M0 -6.9L6.9 0L0 6.9L-6.9 0z" fill="#1a4a8c"/><circle r="5.4" fill="#1a4a8c"/><path d="M-3.4 -1.1L3.4 1.1" stroke="#fff" stroke-width="2"/></g>
<g transform="translate(880.3 236.7)"><circle r="9.9" fill="#ffff00"/><path d="M0 -6.9L6.9 0L0 6.9L-6.9 0z" fill="#7d4262"/><circle r="5.4" fill="#7d4262"/><path d="M-3.4 -1.1L3.4 1.1" stroke="#fff" stroke-width="2"/></g>
<g transform="translate(1407.5 224.8)"><circle r="9.9" fill="#ffff00"/><path d="M0 -6.9L6.9 0L0 6.9L-6.9 0z" fill="#7d4262"/><circle r="5.4" fill="#7d4262"/><path d="M-3.4 -1.1L3.4 1.1" stroke="#fff" stroke-width="2"/></g>
<g transform="translate(886.7 677.6)"><circle r="9.9" fill="#ffff00"/><path d="M0 -6.9L6.9 0L0 6.9L-6.9 0z" fill="#7d4262"/><circle r="5.4" fill="#7d4262"/><path d="M-3.4 -1.1L3.4 1.1" stroke="#fff" stroke-width="2"/></g>
<g transform="translate(415.0 325.4)"><path d="M0 -6.9L6.9 0L0 6.9L-6.9 0z" fill="#1a4a8c"/><circle r="5.4" fill="#1a4a8c"/><path d="M-3.4 -1.1L3.4 1.1" stroke="#fff" stroke-width="2"/></g>
<g transform="translate(903.0 351.7)"><path d="M0 -6.9L6.9 0L0 6.9L-6.9 0z" fill="#1a4a8c"/><circle r="5.4" fill="#1a4a8c"/><path d="M-3.4 -1.1L3.4 1.1" stroke="#fff" stroke-width="2"/></g>
<g transform="translate(859.0 389.3)"><path d="M0 -6.9L6.9 0L0 6.9L-6.9 0z" fill="#1a4a8c"/><circle r="5.4" fill="#1a4a8c"/><path d="M-3.4 -1.1L3.4 1.1" stroke="#fff" stroke-width="2"/></g>
<g transform="translate(1552.8 268.7)"><path d="M0 -6.9L6.9 0L0 6.9L-6.9 0z" fill="#1a4a8c"/><circle r="5.4" fill="#1a4a8c"/><path d="M-3.4 -1.1L3.4 1.1" stroke="#fff" stroke-width="2"/></g>
<g transform="translate(1144.8 791.0)"><path d="M0 -6.9L6.9 0L0 6.9L-6.9 0z" fill="#1a4a8c"/><circle r="5.4" fill="#1a4a8c"/><path d="M-3.4 -1.1L3.4 1.1" stroke="#fff" stroke-width="2"/></g>
<rect x="-2.2" y="0" width="4.4" height="28" fill="#000" stroke="#0a7a0a" stroke-width="1.8" transform="translate(1404 235) rotate(8)"/>
<circle cx="1460.2" cy="307.8" r="9.9" fill="#ffff00"/><circle cx="1460.2" cy="307.8" r="6.4" fill="#1a4a8c"/><circle cx="1460.2" cy="307.8" r="3.6" fill="#fff"/>
<circle cx="1592" cy="348.5" r="6.6" fill="#1a4a8c"/><circle cx="1592" cy="348.5" r="3.8" fill="none" stroke="#fff" stroke-width="1.2"/><circle cx="1592" cy="348.5" r="1.5" fill="#fff"/>
<circle cx="1605.2" cy="366.5" r="5" fill="#fff" stroke="#1a4a8c" stroke-width="2.2"/>
<circle cx="563.7" cy="395.2" r="5" fill="#fff" stroke="#1a4a8c" stroke-width="2.2"/>
<circle cx="1546" cy="206.8" r="4.6" fill="#fff" stroke="#8a8a8a" stroke-width="1.6"/>
<circle cx="1557.2" cy="369.7" r="4.6" fill="#fff" stroke="#8a8a8a" stroke-width="1.6"/>
<circle cx="1225.8" cy="421.6" r="4.6" fill="#fff" stroke="#8a8a8a" stroke-width="1.6"/>
<circle cx="660" cy="406.5" r="4.6" fill="#fff" stroke="#8a8a8a" stroke-width="1.6"/>
<circle cx="718.6" cy="416.4" r="4.6" fill="#fff" stroke="#8a8a8a" stroke-width="1.6"/>
<circle cx="735.3" cy="416.4" r="4.6" fill="#fff" stroke="#8a8a8a" stroke-width="1.6"/>
<circle cx="761" cy="399" r="4.6" fill="#fff" stroke="#8a8a8a" stroke-width="1.6"/>
<circle cx="877" cy="362.5" r="5.5" fill="#fff" stroke="#7d4262" stroke-width="2"/><circle cx="877" cy="362.5" r="2" fill="#7d4262"/>
<circle cx="1010" cy="530.3" r="4.4" fill="#fff" stroke="#7d4262" stroke-width="1.7"/>
<circle cx="403" cy="102" r="4.6" fill="#fff" stroke="#8a8a8a" stroke-width="1.6"/>
<circle cx="521" cy="267.5" r="4.6" fill="#fff" stroke="#8a8a8a" stroke-width="1.6"/>
<!-- route line top-left -->
<path d="M449 96L382 228" stroke="#000" stroke-width="6"/>
<path d="M449 96L382 228" stroke="#ffff00" stroke-width="3.6"/>
<!-- compass -->
<g transform="translate(1633 159.1)">
<circle r="29" fill="#9a9a9a" opacity="0.97"/>
<g transform="rotate(3)">
<path d="M0 -23.5L5 -5L0 0z" fill="#fff"/><path d="M0 -23.5L-5 -5L0 0z" fill="#000"/>
<path d="M0 23.5L-5 5L0 0z" fill="#fff"/><path d="M0 23.5L5 5L0 0z" fill="#000"/>
<path d="M23.5 0L5 5L0 0z" fill="#fff"/><path d="M23.5 0L5 -5L0 0z" fill="#000"/>
<path d="M-23.5 0L-5 -5L0 0z" fill="#fff"/><path d="M-23.5 0L-5 5L0 0z" fill="#000"/>
</g>
</g>
<text x="1629.5" y="127" font-family="Liberation Sans" font-size="12" fill="#000" stroke="#aaa" stroke-width="0.9">N</text>
<!-- nav control -->
<circle cx="1626" cy="530.2" r="34" fill="#8a8a8a" opacity="0.75"/>
<rect x="1610.6" y="554.7" width="30.7" height="238.3" rx="15.3" fill="#8a8a8a" opacity="0.75"/>
<circle cx="1626" cy="530.2" r="26.6" fill="#fff"/>
<path d="M1626 512l7 7h-14zM1626 548.5l7 -7h-14zM1607.5 530.2l7 -7v14zM1644.5 530.2l-7 -7v14z" fill="#555"/>
<rect x="1620" y="590" width="11.8" height="172" fill="#3e4244"/>
<path d="M1615 592v-16a11 10 0 0 1 22 0v16q-11 -5 -22 0z" fill="#fff"/>
<path d="M1621.5 579.5h9M1626 575v9" stroke="#222" stroke-width="1.8"/>
<path d="M1615 761q11 -5 22 0v16a11 10 0 0 1 -22 0z" fill="#fff"/>
<path d="M1621.5 774h9" stroke="#bbb" stroke-width="1.5"/>
<circle cx="1626" cy="740.3" r="11" fill="#fff"/>

</svg>
<div class="mo">
<div class="lgr" style="left:812px;top:120.5px">1°E</div>
<div class="lm" style="left:593.8px;top:117.0px">LFJW</div>
<div class="lm" style="left:753.0px;top:151.0px">LFWW</div>
<div class="lm" style="left:1015.0px;top:142.0px">LFCV</div>
<div class="lm" style="left:448.0px;top:262.0px">LFIL</div>
<div class="lm" style="left:702.6px;top:264.0px">LFID</div>
<div class="lm" style="left:854.3px;top:277.9px">LFYL</div>
<div class="lm" style="left:985.7px;top:271.0px">LFDG</div>
<div class="lm" style="left:935.0px;top:300.6px">LFYP</div>
<div class="lm" style="left:1033.8px;top:285.0px">LF23</div>
<div class="lm" style="left:957.0px;top:342.5px">LFIT</div>
<div class="lm" style="left:497.0px;top:385.7px">LFVJ</div>
<div class="lm" style="left:680.6px;top:351.3px">LFWN</div>
<div class="lm" style="left:666.0px;top:370.5px">LFWM</div>
<div class="lm" style="left:644.3px;top:378.5px">LFWJ</div>
<div class="lm" style="left:660.3px;top:403.6px">LFWL</div>
<div class="lm" style="left:771.5px;top:388.5px">LFWX</div>
<div class="lm" style="left:833.0px;top:383.7px">LFYI</div>
<div class="lm" style="left:708.6px;top:417.6px">LFWE</div>
<div class="lm" style="left:728.0px;top:430.4px">LFDQ</div>
<div class="lm" style="left:616.8px;top:425.6px">LFJK</div>
<div class="lm" style="left:588.0px;top:438.4px">LFVN</div>
<div class="lm" style="left:643.0px;top:445.5px">LFDT</div>
<div class="lm" style="left:863.5px;top:438.4px">LFYM</div>
<div class="lm" style="left:829.0px;top:450.3px">LFJH</div>
<div class="lm" style="left:898.5px;top:449.5px">LFYJ</div>
<div class="lm" style="left:522.5px;top:459.0px">LFCO</div>
<div class="lm" style="left:992.5px;top:387.7px">LFYO</div>
<div class="lm" style="left:1000.5px;top:455.0px">LFYN</div>
<div class="lm" style="left:1289.7px;top:164.0px">LFNO</div>
<div class="lm" style="left:1455.0px;top:121.7px">LFHF</div>
<div class="lm" style="left:1528.0px;top:134.0px">LFHD</div>
<div class="lm" style="left:1564.0px;top:151.0px">LFNV</div>
<div class="lm" style="left:1516.0px;top:168.9px">LFND</div>
<div class="lm" style="left:1658.0px;top:107.8px">LFJE</div>
<div class="lm" style="left:1394.0px;top:175.6px">LFTN</div>
<div class="lm" style="left:1467.0px;top:218.0px">LFNU</div>
<div class="lm" style="left:1535.0px;top:240.7px">LFNT</div>
<div class="lm" style="left:1470.0px;top:278.7px">LFME</div>
<div class="lm" style="left:1562.0px;top:300.6px">LFNZ</div>
<div class="lm" style="left:1228.5px;top:335.0px">LFNX</div>
<div class="lm" style="left:1255.0px;top:343.7px">LF82</div>
<div class="lm" style="left:1210.5px;top:452.3px">LFNN</div>
<div class="lm" style="left:747.0px;top:474.0px">LFIM</div>
<div class="lm" style="left:987.0px;top:497.2px">LFUO</div>
<div class="lm" style="left:595.3px;top:497.2px">LFJN</div>
<div class="lm" style="left:1053.3px;top:487.9px">LFUC</div>
<div class="lm" style="left:1020.0px;top:526.3px">LFNW</div>
<div class="lm" style="left:1105.0px;top:549.4px">LF90</div>
<div class="lm" style="left:1033.0px;top:621.0px">LFNQ</div>
<div class="lm" style="left:1012.0px;top:646.1px">LFYS</div>
<div class="lm" style="left:665.3px;top:671.6px">LEPG</div>
<div class="lm" style="left:646.0px;top:762.7px">LEIL</div>
<div class="lm" style="left:525.0px;top:771.2px">LETB</div>
<div class="lm" style="left:979.0px;top:741.2px">LEAK</div>
<div class="lm" style="left:869.0px;top:767.9px">LETU</div>
<div class="lm" style="left:1128.2px;top:703.2px">LEAF</div>
<div class="lm" style="left:1179.5px;top:701.6px">LEWG</div>
<div class="lm" style="left:1210.5px;top:724.2px">LEVW</div>
<div class="lm" style="left:1199.0px;top:753.8px">LEFX</div>
<div class="lm" style="left:1235.0px;top:753.8px">LETD</div>
<div class="lm" style="left:1059.4px;top:764.3px">LESY</div>
<div class="lm" style="left:1127.0px;top:825.0px">LEHO</div>
<div class="lm" style="left:1153.0px;top:841.2px">LEPF</div>
<div class="lm" style="left:868.0px;top:841.0px">LEDI</div>
<div class="lg" style="left:835.0px;top:143.0px">LFZB</div>
<div class="lg" style="left:933.0px;top:103.0px">LFIE</div>
<div class="lg" style="left:656.7px;top:268.3px">LFKN</div>
<div class="lg" style="left:794.0px;top:309.4px">LFKZ</div>
<div class="lg" style="left:804.0px;top:327.4px">LFKW</div>
<div class="lg" style="left:539.0px;top:353.7px">LFVK</div>
<div class="lg" style="left:419.0px;top:369.3px">LFUZ</div>
<div class="lg" style="left:718.5px;top:445.5px">LFUW</div>
<div class="lg" style="left:817.5px;top:461.5px">LFWG</div>
<div class="lg" style="left:580.0px;top:458.3px">LFVQ</div>
<div class="lg" style="left:488.0px;top:471.3px">LFJM</div>
<div class="lg" style="left:648.0px;top:529.5px">LFMB</div>
<div class="lg" style="left:872.0px;top:528.7px">LFSQ</div>
<div class="lg" style="left:1641.0px;top:97.8px">LF99</div>
<div class="lg" style="left:1384.5px;top:236.7px">LF10</div>
<div class="lg" style="left:1042.0px;top:590.7px">LFRA</div>
<div class="lg" style="left:1150.0px;top:619.4px">LF32</div>
<div class="lg" style="left:1069.0px;top:773.6px">LESV</div>
<div class="lg" style="left:862.0px;top:238.7px">LFXA</div>
<div class="lM" style="left:668.3px;top:104.3px">LFDM</div>
<div class="lM" style="left:821.0px;top:115.3px">LFDX</div>
<div class="lM" style="left:723.4px;top:140.3px">LFWQ</div>
<div class="lM" style="left:775.0px;top:131.0px">LFCW</div>
<div class="lM" style="left:912.0px;top:144.3px">LFCC</div>
<div class="lM" style="left:836.0px;top:155.3px">LFZE</div>
<div class="lM" style="left:961.0px;top:176.9px">LFYU</div>
<div class="lM" style="left:935.0px;top:189.3px">LFZD</div>
<div class="lM" style="left:845.0px;top:214.3px">LFCX</div>
<div class="lM" style="left:623.6px;top:297.9px">LFCN</div>
<div class="lM" style="left:582.8px;top:313.9px">LFDA</div>
<div class="lM" style="left:744.5px;top:319.9px">LFDH</div>
<div class="lM" style="left:818.0px;top:270.0px">LFWP</div>
<div class="lM" style="left:1033.8px;top:260.0px">LFCI</div>
<div class="lM" style="left:1013.0px;top:297.9px">LFCQ</div>
<div class="lM" style="left:1008.0px;top:373.8px">LFIR</div>
<div class="lM" style="left:1010.0px;top:393.7px">LFMG</div>
<div class="lM" style="left:997.0px;top:418.9px">LFMW</div>
<div class="lM" style="left:704.6px;top:376.6px">LFWF</div>
<div class="lM" style="left:793.0px;top:400.9px">LFWD</div>
<div class="lM" style="left:1110.0px;top:190.1px">LFIG</div>
<div class="lM" style="left:1303.0px;top:103.1px">LFNB</div>
<div class="lM" style="left:1463.0px;top:94.3px">LFHO</div>
<div class="lM" style="left:1568.0px;top:189.3px">LF51</div>
<div class="lM" style="left:1236.6px;top:240.0px">LFCM</div>
<div class="lM" style="left:1601.0px;top:230.8px">LFNH</div>
<div class="lM" style="left:1154.0px;top:283.9px">LFIF</div>
<div class="lM" style="left:1351.0px;top:289.9px">LFNL</div>
<div class="lM" style="left:1406.3px;top:337.8px">LFNG</div>
<div class="lM" style="left:1586.0px;top:327.9px">LFNE</div>
<div class="lM" style="left:1150.8px;top:453.6px">LFMZ</div>
<div class="lM" style="left:953.9px;top:476.3px">LFDJ</div>
<div class="lM" style="left:840.6px;top:497.7px">LFCG</div>
<div class="lM" style="left:713.0px;top:552.7px">LFIP</div>
<div class="lM" style="left:491.3px;top:611.8px">LECI</div>
<div class="lM" style="left:569.0px;top:738.1px">LEHC</div>
<div class="lM" style="left:722.0px;top:752.7px">LENA</div>
<div class="lM" style="left:985.0px;top:659.2px">LECD</div>
<div class="lM" style="left:1223.3px;top:692.0px">LEAP</div>
<div class="lM" style="left:467.8px;top:836.5px">LEZA</div>
<div class="lI" style="left:743.2px;top:191.5px">LFBA</div>
<div class="lI" style="left:891.0px;top:334.1px">LFBO</div>
<div class="lI" style="left:550.5px;top:401.1px">LFBP</div>
<div class="lI" style="left:630.7px;top:451.8px">LFBT</div>
<div class="lI" style="left:1104.0px;top:129.2px">LFCR</div>
<div class="lI" style="left:1385.5px;top:347.2px">LFMT</div>
<div class="lI" style="left:1625.0px;top:386.0px">LFML</div>
<div class="lI" style="left:1654.0px;top:368.0px">LFMA</div>
<div class="lI" style="left:1067.7px;top:355.2px">LFCK</div>
<div class="lI" style="left:1269.4px;top:415.1px">LFMU</div>
<div class="lI" style="left:1071.0px;top:443.8px">LFMK</div>
<div class="lI" style="left:1177.6px;top:567.9px">LFMP</div>
<div class="lJ" style="left:893.0px;top:230.2px">LFDB</div>
<div class="lJ" style="left:1420.0px;top:218.3px">LFMS</div>
<div class="lJ" style="left:899.3px;top:671.1px">LESU</div>
<div class="lb" style="left:426.0px;top:318.9px">LFBY</div>
<div class="lb" style="left:915.0px;top:345.2px">LFCL</div>
<div class="lb" style="left:871.0px;top:382.8px">LFBR</div>
<div class="lb" style="left:1565.0px;top:262.2px">LFMV</div>
<div class="lb" style="left:1157.0px;top:784.5px">LEGE</div>
<div class="lM" style="left:382px;top:587.3px">LELE</div>
<div class="lm" style="left:744.3px;top:554.6px">LFCB</div>
<div class="lm" style="left:805px;top:127.5px">FXD</div>
<div class="lG" style="left:533px;top:261.0px">LFBM</div>
<div class="lG" style="left:416px;top:95.5px"><span style="color:#4a5a7a">LFBC</span></div>
<div class="lG" style="left:1558px;top:200.3px">LFMO</div>
<div class="lG" style="left:1569px;top:363.2px">LFMI</div>
<div class="lg" style="left:383px;top:615.3px">LESG</div>
<div class="lbs" style="left:574.4px;top:391.0px">LFJV</div>
<div class="lbs" style="left:1616px;top:362.5px">LFNR</div>
<div class="lbs" style="left:1472px;top:303.8px"><i>LFTW</i></div>
<div class="lM" style="left:889px;top:355.8px">LFBF</div>
<div class="lb" style="left:1604px;top:342.0px">LFMY</div>
<div class="lgr" style="left:395px;top:242.2px">44°N</div>
<div class="lgr" style="left:394.2px;top:505.2px">43°N</div>
<div class="lgr" style="left:394.2px;top:764.2px">42°N</div>
<div class="lgr" style="left:1003px;top:120.5px">2°E</div>
<div class="lgr" style="left:1193px;top:120.5px">3°E</div>
<div class="lgr" style="left:1383.5px;top:120.5px">4°E</div>
<div class="lgr" style="left:1574px;top:120.5px">5°E</div>
<div class="lgr" style="left:621px;top:476.5px"><span style="color:#e8d800;font-size:11.6px">Prime Meridian</span></div>
<!-- minimap -->
<div style="position:absolute;left:392.9px;top:109.9px;width:174px;height:94px;background:#a29ea6;border:1px solid #8a8a8a;overflow:hidden">
<svg width="174" height="94" viewBox="0 0 174 94" style="position:absolute;left:0;top:0">
<path d="M3.5 14.8L11.6 13.2L21.2 13.2L30.9 11.6L37.3 8.4L50.2 6.8L61.4 7.6L66.2 10L78.3 8.4L79 10L66.2 16.4L62.2 22.8L58.2 27.7L53.4 34.1L46.9 37.3L42.1 42.1L37.3 37.3L32.5 30.9L27.7 24.4L21.2 19.6L13.2 17.2L5.1 16.4z" fill="#000"/>
<path d="M49.4 42.1L57.4 43.7L67.5 50.2L69.1 53.4L64.3 61.4L57.9 67.8L54.7 72.7L53.4 69.5L52.6 59.8L49.4 50.2z" fill="#000"/>
<path d="M79 21.2L85.5 18L91.9 13.2L101.6 11.6L111.2 10L125.7 11.6L141.8 10L157.9 12.4L170.7 14.8L162.7 21.2L154.7 26L146.6 34.1L140.2 42.1L133.8 40.5L130.5 35.7L120.9 37.3L114.5 34.1L104.8 30.9L95.2 29.3L85.5 29.3L80.7 26z" fill="#000"/>
<path d="M80.7 32.5L90.3 30.1L101.6 31.7L111.2 37.3L116 42.1L111.2 48.6L104.8 56.6L100 63L95.2 61.4L91.9 51.8L85.5 45.4L79.9 40.5z" fill="#000"/>
<path d="M140.2 55L148.2 51.8L156.3 55L157.9 61.4L151.4 64.6L141.8 63z" fill="#000"/>
<path d="M3.5 85.5L37.3 82.3L69.5 83.9L101.6 80.7L133.8 79.9L166 81.5L170 89.5L3.5 89.5z" fill="#000"/>
<circle cx="87.5" cy="26" r="2.8" fill="#fff"/>
<path d="M53 -10L5 86" stroke="#e0e090" stroke-width="3" opacity="0.65"/>
<path d="M66.2 -10L53.4 83.9L93.5 113M182 5L93 113" stroke="#c8a8e8" stroke-width="1.5" fill="none" opacity="0.7"/>
<path d="M35 -10V94" stroke="#d0d0d0" stroke-width="1.2" opacity="0.5"/>
<rect x="14" y="74" width="24" height="10" fill="#e0e0a0" opacity="0.6"/>
<text x="15" y="83" font-family="Liberation Sans" font-size="9" font-weight="bold" fill="#888">TOD</text>
</svg>
</div>
<div style="position:absolute;left:407px;top:202px;width:35px;height:8px;background:#ffff99;overflow:hidden"><div style="position:absolute;left:2px;top:-5px;font:bold 11px Liberation Sans;color:#222;white-space:pre">42 NM</div></div>
<div style="position:absolute;left:369px;top:215px;width:40px;height:13px;background:#fff;transform:rotate(-63deg);transform-origin:50% 50%;font:bold 11px 'Liberation Sans';line-height:13px;padding-left:3px">23°M</div>
<!-- scale bar -->
<div style="position:absolute;left:394px;top:810.8px;width:655px;height:27px;background:#9e9aa2;opacity:0.93"></div>
<div style="position:absolute;left:399.1px;top:828.5px;width:602.5px;height:5.4px;background:#000"></div>
<div style="position:absolute;left:485.1px;top:829.1px;width:86px;height:3.5px;background:#fff"></div>
<div style="position:absolute;left:657px;top:829.1px;width:86px;height:3.5px;background:#fff"></div>
<div style="position:absolute;left:828.3px;top:829.1px;width:86.7px;height:3.5px;background:#fff"></div>
<div style="position:absolute;left:1001.6px;top:829px;width:32px;height:4.5px;background:#8c8890"></div>
<div class="t" style="left:396.6px;top:816px;font-size:11px;color:#000">0 nm</div>
<div class="t" style="left:556px;top:816px;width:25px;text-align:center;font-size:11px;color:#000">40</div>
<div class="t" style="left:728px;top:816px;width:25px;text-align:center;font-size:11px;color:#000">80</div>
<div class="t" style="left:899px;top:816px;width:28px;text-align:center;font-size:11px;color:#000">120</div>
<!-- copyright -->
<div style="position:absolute;left:1593.6px;top:836.3px;width:82px;height:12px;background:#a29ea6"></div>
<div class="t" style="left:1594px;top:837.5px;font-size:10px;color:#000">© open flightmaps</div>

<div class="lg" style="left:729px;top:412.4px">LFWNFKJ</div>
<div class="lm" style="left:1207px;top:570.4px">F01</div>
<div class="lm" style="left:1236px;top:417.6px">LF3</div>
<div style="position:absolute;left:466px;top:812px;padding:0 1px;height:13px;line-height:13px;background:#c8c8c8;color:#b8a0b0;font:bold 11px Liberation Sans;letter-spacing:-0.7px">LEVN</div>
<div style="position:absolute;left:990px;top:814px;padding:0 1px;height:13px;line-height:13px;background:#c8c8c8;color:#b8a0b0;font:bold 11px Liberation Sans;letter-spacing:-0.7px">LENV</div>
</div>
</div>
<div class="a" style="left:0;top:853px;width:1675px;height:1px;background:#d0d0d0"></div>
<div class="a" style="left:0;top:854px;width:1675px;height:17px;background:#d9d9d9"></div>
<div class="t" style="left:1.2px;top:858.63px;font-size:10.6px;color:#111">PROFIL D'ÉLÉVATION DU PLAN DE VOL</div>
<svg class="a" style="left:1638px;top:858px" width="11" height="10"><path d="M3.5 0.5h6v6h-2M0.5 3.5h6v6h-6z" fill="none" stroke="#000" stroke-width="1"/><path d="M0.5 3.5h6" stroke="#000" stroke-width="2"/><path d="M3.5 0.5h6" stroke="#000" stroke-width="2"/></svg>
<svg class="a" style="left:1659px;top:858px" width="10" height="10"><path d="M1 1L9 9M9 1L1 9" stroke="#000" stroke-width="1.6"/></svg>
<div class="a" style="left:51.2px;top:873.5px;width:1487px;height:13px;background:#fff"></div>
<div class="t" style="left:586px;width:400px;text-align:center;top:874.77px;font-size:9.6px;color:#a0a0a0"><b>865 NM</b></div>
<svg class="a" style="left:0;top:871px" width="1675" height="68" viewBox="0 871 1675 68"><rect x="51.2" y="886.3" width="1418.6" height="60" fill="#ccccff"/><rect x="52" y="887" width="51" height="60" fill="#eaeaee"/><path d="M51.2 886.5H1469.8" stroke="#707070" stroke-width="1.2"/><path d="M51.6 886V939" stroke="#707070" stroke-width="1.2"/><path d="M103 874V939M1469.8 874V939" stroke="#a8a8a8" stroke-width="1.5"/><path d="M52 901.8H1469.8M52 909.9H1469.8M52 935.9H1469.8" stroke="#aaaabb" stroke-width="1.4"/><path d="M52 931H1469.8" stroke="#ff0000" stroke-width="4.2"/><path d="M104 945L149.7 901.9H1404L1450 945" fill="none" stroke="#000" stroke-width="7" stroke-linejoin="round"/><path d="M104 945L149.7 901.9H1404L1450 945" fill="none" stroke="#ffff00" stroke-width="4.5" stroke-linejoin="round"/><circle cx="149.7" cy="901.5" r="5.6" fill="none" stroke="#000" stroke-width="2"/><circle cx="1404" cy="901.5" r="5.6" fill="none" stroke="#000" stroke-width="2"/><path d="M96.5 902l6.5 3 6.5-3-2 4-4.5 2.5-4.5-2.5z" fill="#1f4f8a"/><path d="M1463 893l5 6 8-6 3 3-7 7h-4l-7-7z" fill="#1f4f8a"/></svg>
<div class="a" style="left:80px;top:890px;width:58px;height:10.5px;background:#ffff99"></div>
<div class="t" style="left:81px;top:891.17px;font-size:10.2px;"><b>TOC 30 NM</b></div>
<div class="a" style="left:87.3px;top:909.7px;width:31.5px;height:11.5px;background:#ffff99"></div>
<div class="t" style="left:88px;top:910.67px;font-size:10.2px;color:#2a4a78"><b><i>GMMX</i></b></div>
<div class="a" style="left:757.9px;top:896.3px;width:28.1px;height:11.3px;background:#fff"></div>
<div class="t" style="left:758.5px;top:897.16px;font-size:10.8px;"><b>23°M</b></div>
<div class="a" style="left:1416px;top:890px;width:59px;height:10.5px;background:#ffff99"></div>
<div class="t" style="left:1417px;top:891.17px;font-size:10.2px;"><b>TOD 42 NM</b></div>
<div class="a" style="left:1457px;top:909.7px;width:27px;height:11.5px;background:#ffff99"></div>
<div class="t" style="left:1458px;top:910.67px;font-size:10.2px;color:#2a4a78"><b><i>LFBD</i></b></div>
<div class="t" style="left:104px;top:922.5px;width:40px;height:11.5px;line-height:11.5px;background:#fff;transform:rotate(-44deg);transform-origin:50% 50%;font-size:10.5px;font-weight:bold;padding-left:3px">23°M</div>
<div class="t" style="left:1394px;top:914.5px;width:66px;height:11.5px;line-height:11.5px;background:#fff;transform:rotate(43.5deg);transform-origin:50% 50%;font-size:10.5px;font-weight:bold;padding-left:9px">2... / -2.5°</div>
<div class="t" style="left:-351px;width:400px;text-align:right;top:894.78px;font-size:11.6px;"><b>11 500 ft</b></div>
<div class="t" style="left:-351px;width:400px;text-align:right;top:903.48px;font-size:11.6px;color:#a8a8a8"><b>10 000</b></div>
<div class="t" style="left:-351px;width:400px;text-align:right;top:924.68px;font-size:11.6px;color:#ee0000"><b>6 000 ft</b></div>
<div class="t" style="left:-351px;width:400px;text-align:right;top:934.18px;font-size:11.6px;color:#a8a8a8"><b>5 000</b></div>
<div class="a" style="left:1521.8px;top:886.5px;width:1px;height:53px;background:#dcdcdc"></div>
<div class="a" style="left:1469.8px;top:886px;width:68.7px;height:1px;background:#8a8a8a"></div>
<div class="a" style="left:1538px;top:886px;width:1px;height:53px;background:#8a8a8a"></div>
<svg class="a" style="left:1524px;top:891px" width="12" height="8"><path d="M1 6l5-5 5 5" fill="none" stroke="#bbb" stroke-width="1.2"/></svg>
<div class="a" style="left:1539.5px;top:874px;width:5.2px;height:65px;background:#cdcdcd"></div>
<svg class="a" style="left:1539px;top:905px" width="8" height="34"><path d="M1 0v7h6M1 8v7h6M1 16v7h6M1 24v7h6" fill="none" stroke="#000" stroke-width="1.2"/></svg>
<div class="a" style="left:1545px;top:897.8px;width:130px;height:1px;background:#c8c8c8"></div>
<div class="a" style="left:1589.6px;top:875.3px;width:24.6px;height:21.1px;background:#e4e4e4;border:1px solid #adadad"></div>
<div class="a" style="left:1619.5px;top:875.3px;width:24.6px;height:21.1px;background:#e4e4e4;border:1px solid #adadad"></div>
<div class="a" style="left:1649.5px;top:875.3px;width:24.6px;height:21.1px;background:#e4e4e4;border:1px solid #adadad"></div>
<svg class="a" style="left:1592px;top:877px" width="20" height="18" viewBox="0 0 24 24"><path d="M5 5l14 14M19 5L5 19" stroke="#111" stroke-width="2.5"/><path d="M3 3h7l-7 7zM21 3h-7l7 7zM3 21h7l-7-7zM21 21h-7l7-7z" fill="#111"/></svg>
<svg class="a" style="left:1621px;top:877px" width="21" height="18" viewBox="0 0 24 24"><rect x="2" y="2" width="18" height="15" fill="#eee" stroke="#888"/><path d="M2 6h18" stroke="#888"/><circle cx="15" cy="16" r="6" fill="#ddd" stroke="#999" stroke-width="2" stroke-dasharray="2 1.5"/><circle cx="15" cy="16" r="2.5" fill="#fff" stroke="#999"/></svg>
<svg class="a" style="left:1652px;top:877px" width="19" height="18"><circle cx="9.5" cy="9" r="8" fill="#2a78c8"/><text x="5.5" y="13.5" font-size="12" font-weight="bold" font-family="Liberation Sans" fill="#fff">?</text></svg>
<svg class="a" style="left:1578px;top:902px" width="14" height="14"><path d="M2 6l5-5 5 5M2 8l5 5 5-5" fill="none" stroke="#e06a20" stroke-width="2"/></svg>
<svg class="a" style="left:1628px;top:902px" width="16" height="14"><path d="M6 2L1 7l5 5M10 2l5 5-5 5" fill="none" stroke="#e06a20" stroke-width="2"/></svg>
<div class="a" style="left:1583px;top:917px;width:4px;height:22px;background:#e6e6e6;border:1px solid #cfcfcf"></div>
<div class="a" style="left:1634px;top:917px;width:4px;height:22px;background:#e6e6e6;border:1px solid #cfcfcf"></div>
</body></html>
